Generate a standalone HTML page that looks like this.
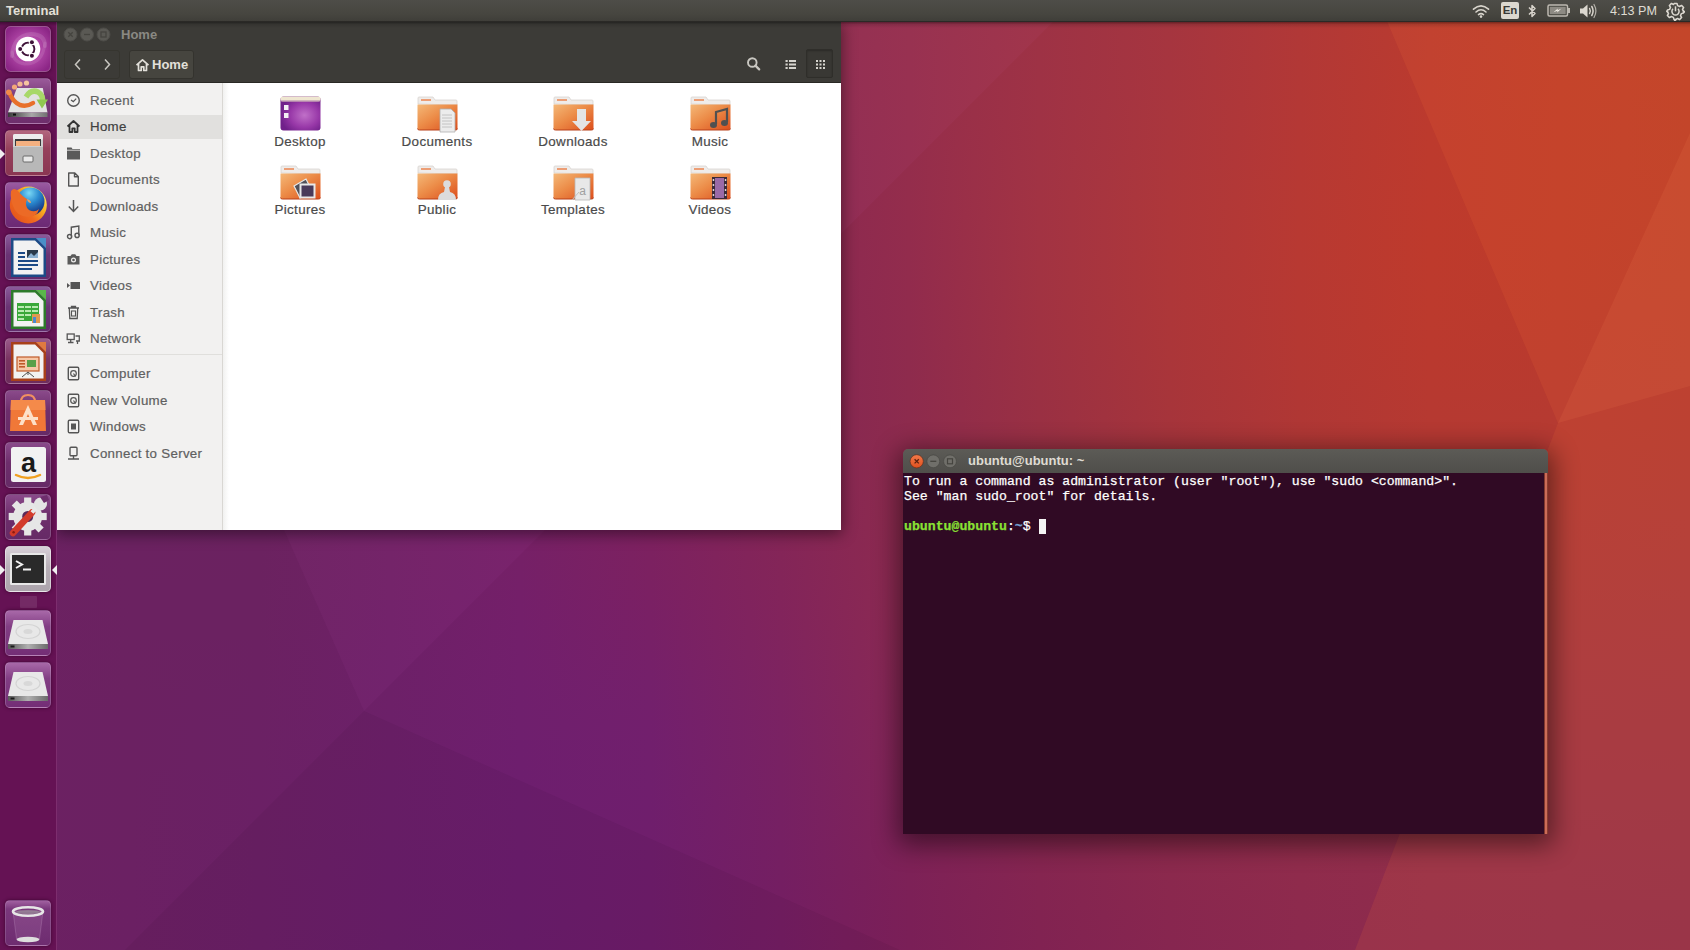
<!DOCTYPE html>
<html><head><meta charset="utf-8">
<style>
*{margin:0;padding:0;box-sizing:border-box}
html,body{width:1690px;height:950px;overflow:hidden;font-family:"Liberation Sans",sans-serif}
body{position:relative;background:#6c2163}
svg{display:block}
.a{position:absolute}
#wall{position:absolute;left:0;top:0}
#panel{position:absolute;z-index:6;left:0;top:0;width:1690px;height:22px;background:linear-gradient(#4e4d48,#46453f 70%,#3f3e39);border-bottom:1px solid #2a2926;color:#dfdbd2}
#launcher{position:absolute;z-index:5;left:0;top:22px;width:57px;height:928px;background:#651254;border-right:1px solid #7d2d6e}
.tile{position:absolute;left:5px;width:46px;height:46px;border-radius:5px;box-shadow:0 0 3px 1px rgba(50,0,40,.45)}
.tile .bg{position:absolute;left:0;top:0;width:46px;height:46px;border-radius:5px;border:1px solid rgba(255,255,255,.18);background:linear-gradient(rgba(255,255,255,.22),rgba(255,255,255,.06) 45%,rgba(255,255,255,.04))}
.tile svg{position:absolute;left:0;top:0}
#naut{position:absolute;left:57px;top:22px;width:784px;height:508px;box-shadow:0 3px 14px 1px rgba(0,0,0,.45)}
#nhead{position:absolute;left:0;top:0;width:784px;height:61px;background:#3c3b37;border-bottom:1px solid #292824}
#side{position:absolute;left:0;top:61px;width:166px;height:447px;background:#f2f1f0;border-right:1px solid #d9d7d3}
#content{position:absolute;left:166px;top:61px;width:618px;height:447px;background:linear-gradient(90deg,#f1f1f0,#f6f6f5 2px,#fff 6px)}
.si{position:absolute;left:0;width:165px;height:26px;font-size:13.3px;color:#606060;line-height:26px}
.si span{position:absolute;left:33px;top:1px;letter-spacing:.3px;-webkit-text-stroke:.2px currentColor}
.si svg{position:absolute;left:9px;top:6px}
.fi{position:absolute;width:110px;text-align:center;font-size:13.4px;color:#4a4a4a;letter-spacing:.35px;-webkit-text-stroke:.2px currentColor}
.fi svg{margin:0 auto}
#term{position:absolute;left:903px;top:449px;width:645px;height:385px;box-shadow:0 6px 26px 5px rgba(0,0,0,.48);border-radius:5px 5px 0 0}
#thead{position:absolute;left:0;top:0;width:645px;height:24px;background:linear-gradient(#5c5b56,#4f4e4a);border-radius:5px 5px 0 0}
#tbody{position:absolute;left:0;top:24px;width:645px;height:361px;background:#300a24;font-family:"Liberation Mono",monospace;color:#fff;font-size:13.2px}
.tl{position:absolute;left:1px;white-space:pre;line-height:15px;-webkit-text-stroke:.25px currentColor}
</style></head><body>
<svg id="wall" width="1690" height="950" viewBox="0 0 1690 950">
<defs><linearGradient id="r0"><stop offset="0.000" stop-color="#73235e"/><stop offset="0.077" stop-color="#76245c"/><stop offset="0.154" stop-color="#792559"/><stop offset="0.231" stop-color="#7d2756"/><stop offset="0.308" stop-color="#822953"/><stop offset="0.385" stop-color="#882a50"/><stop offset="0.462" stop-color="#8e2c4e"/><stop offset="0.538" stop-color="#952f4a"/><stop offset="0.615" stop-color="#9d3245"/><stop offset="0.692" stop-color="#a43540"/><stop offset="0.769" stop-color="#b03837"/><stop offset="0.846" stop-color="#b93b2f"/><stop offset="0.923" stop-color="#bc3d2a"/><stop offset="1.000" stop-color="#bb4028"/></linearGradient><linearGradient id="r1"><stop offset="0.000" stop-color="#73235e"/><stop offset="0.077" stop-color="#75245c"/><stop offset="0.154" stop-color="#792559"/><stop offset="0.231" stop-color="#7d2756"/><stop offset="0.308" stop-color="#822953"/><stop offset="0.385" stop-color="#882a51"/><stop offset="0.462" stop-color="#8e2c4e"/><stop offset="0.538" stop-color="#952f4a"/><stop offset="0.615" stop-color="#9d3245"/><stop offset="0.692" stop-color="#a5353f"/><stop offset="0.769" stop-color="#b03837"/><stop offset="0.846" stop-color="#b93b2f"/><stop offset="0.923" stop-color="#bc3d2a"/><stop offset="1.000" stop-color="#bb4028"/></linearGradient><linearGradient id="r2"><stop offset="0.000" stop-color="#72235f"/><stop offset="0.077" stop-color="#75245c"/><stop offset="0.154" stop-color="#782559"/><stop offset="0.231" stop-color="#7d2756"/><stop offset="0.308" stop-color="#822853"/><stop offset="0.385" stop-color="#882a51"/><stop offset="0.462" stop-color="#8e2c4e"/><stop offset="0.538" stop-color="#952f4b"/><stop offset="0.615" stop-color="#9d3245"/><stop offset="0.692" stop-color="#a5353f"/><stop offset="0.769" stop-color="#b03837"/><stop offset="0.846" stop-color="#b93b2f"/><stop offset="0.923" stop-color="#bc3d2a"/><stop offset="1.000" stop-color="#bc3f28"/></linearGradient><linearGradient id="r3"><stop offset="0.000" stop-color="#72235f"/><stop offset="0.077" stop-color="#75245c"/><stop offset="0.154" stop-color="#78255a"/><stop offset="0.231" stop-color="#7c2657"/><stop offset="0.308" stop-color="#822853"/><stop offset="0.385" stop-color="#872a51"/><stop offset="0.462" stop-color="#8d2c4e"/><stop offset="0.538" stop-color="#952f4b"/><stop offset="0.615" stop-color="#9d3245"/><stop offset="0.692" stop-color="#a5353f"/><stop offset="0.769" stop-color="#b13837"/><stop offset="0.846" stop-color="#ba3b2f"/><stop offset="0.923" stop-color="#bc3d2a"/><stop offset="1.000" stop-color="#bc3f28"/></linearGradient><linearGradient id="r4"><stop offset="0.000" stop-color="#72235f"/><stop offset="0.077" stop-color="#74245d"/><stop offset="0.154" stop-color="#78255a"/><stop offset="0.231" stop-color="#7c2657"/><stop offset="0.308" stop-color="#812854"/><stop offset="0.385" stop-color="#872a51"/><stop offset="0.462" stop-color="#8d2b4f"/><stop offset="0.538" stop-color="#952f4b"/><stop offset="0.615" stop-color="#9e3245"/><stop offset="0.692" stop-color="#a6353f"/><stop offset="0.769" stop-color="#b13837"/><stop offset="0.846" stop-color="#ba3b2f"/><stop offset="0.923" stop-color="#bc3d2a"/><stop offset="1.000" stop-color="#bc3f28"/></linearGradient><linearGradient id="r5"><stop offset="0.000" stop-color="#71235f"/><stop offset="0.077" stop-color="#74245d"/><stop offset="0.154" stop-color="#77255a"/><stop offset="0.231" stop-color="#7c2657"/><stop offset="0.308" stop-color="#812854"/><stop offset="0.385" stop-color="#872951"/><stop offset="0.462" stop-color="#8d2b4f"/><stop offset="0.538" stop-color="#952e4b"/><stop offset="0.615" stop-color="#9e3245"/><stop offset="0.692" stop-color="#a6353f"/><stop offset="0.769" stop-color="#b23836"/><stop offset="0.846" stop-color="#ba3b2f"/><stop offset="0.923" stop-color="#bd3d2a"/><stop offset="1.000" stop-color="#bc3f28"/></linearGradient><linearGradient id="r6"><stop offset="0.000" stop-color="#71235f"/><stop offset="0.077" stop-color="#74245d"/><stop offset="0.154" stop-color="#77255a"/><stop offset="0.231" stop-color="#7b2657"/><stop offset="0.308" stop-color="#812854"/><stop offset="0.385" stop-color="#862951"/><stop offset="0.462" stop-color="#8d2b4f"/><stop offset="0.538" stop-color="#952e4b"/><stop offset="0.615" stop-color="#9e3245"/><stop offset="0.692" stop-color="#a6353f"/><stop offset="0.769" stop-color="#b23836"/><stop offset="0.846" stop-color="#bb3a2e"/><stop offset="0.923" stop-color="#bd3d2a"/><stop offset="1.000" stop-color="#bc3f28"/></linearGradient><linearGradient id="r7"><stop offset="0.000" stop-color="#71235f"/><stop offset="0.077" stop-color="#73235d"/><stop offset="0.154" stop-color="#77255a"/><stop offset="0.231" stop-color="#7b2657"/><stop offset="0.308" stop-color="#802754"/><stop offset="0.385" stop-color="#862952"/><stop offset="0.462" stop-color="#8d2b4f"/><stop offset="0.538" stop-color="#952e4b"/><stop offset="0.615" stop-color="#9e3245"/><stop offset="0.692" stop-color="#a7353e"/><stop offset="0.769" stop-color="#b23836"/><stop offset="0.846" stop-color="#bb3a2e"/><stop offset="0.923" stop-color="#bd3d2a"/><stop offset="1.000" stop-color="#bc3f28"/></linearGradient><linearGradient id="r8"><stop offset="0.000" stop-color="#71235f"/><stop offset="0.077" stop-color="#73235d"/><stop offset="0.154" stop-color="#76245a"/><stop offset="0.231" stop-color="#7b2657"/><stop offset="0.308" stop-color="#802754"/><stop offset="0.385" stop-color="#862952"/><stop offset="0.462" stop-color="#8c2b4f"/><stop offset="0.538" stop-color="#952e4b"/><stop offset="0.615" stop-color="#9f3245"/><stop offset="0.692" stop-color="#a8353e"/><stop offset="0.769" stop-color="#b33836"/><stop offset="0.846" stop-color="#bb3a2e"/><stop offset="0.923" stop-color="#bd3d2a"/><stop offset="1.000" stop-color="#bc3f28"/></linearGradient><linearGradient id="r9"><stop offset="0.000" stop-color="#702360"/><stop offset="0.077" stop-color="#73235d"/><stop offset="0.154" stop-color="#76245b"/><stop offset="0.231" stop-color="#7b2558"/><stop offset="0.308" stop-color="#802755"/><stop offset="0.385" stop-color="#862852"/><stop offset="0.462" stop-color="#8c2a4f"/><stop offset="0.538" stop-color="#952e4b"/><stop offset="0.615" stop-color="#9f3245"/><stop offset="0.692" stop-color="#a8353e"/><stop offset="0.769" stop-color="#b33835"/><stop offset="0.846" stop-color="#bc3a2e"/><stop offset="0.923" stop-color="#bd3d2a"/><stop offset="1.000" stop-color="#bb3f28"/></linearGradient><linearGradient id="r10"><stop offset="0.000" stop-color="#702260"/><stop offset="0.077" stop-color="#72235e"/><stop offset="0.154" stop-color="#76245b"/><stop offset="0.231" stop-color="#7a2558"/><stop offset="0.308" stop-color="#7f2755"/><stop offset="0.385" stop-color="#852852"/><stop offset="0.462" stop-color="#8c2a50"/><stop offset="0.538" stop-color="#952e4b"/><stop offset="0.615" stop-color="#9f3245"/><stop offset="0.692" stop-color="#a9363e"/><stop offset="0.769" stop-color="#b43835"/><stop offset="0.846" stop-color="#bc3a2e"/><stop offset="0.923" stop-color="#bd3d2a"/><stop offset="1.000" stop-color="#bb3e28"/></linearGradient><linearGradient id="r11"><stop offset="0.000" stop-color="#702260"/><stop offset="0.077" stop-color="#72235e"/><stop offset="0.154" stop-color="#75245b"/><stop offset="0.231" stop-color="#7a2558"/><stop offset="0.308" stop-color="#7f2655"/><stop offset="0.385" stop-color="#852852"/><stop offset="0.462" stop-color="#8c2a50"/><stop offset="0.538" stop-color="#952e4b"/><stop offset="0.615" stop-color="#9f3245"/><stop offset="0.692" stop-color="#a9363d"/><stop offset="0.769" stop-color="#b43835"/><stop offset="0.846" stop-color="#bc3a2e"/><stop offset="0.923" stop-color="#bd3c2a"/><stop offset="1.000" stop-color="#bb3e28"/></linearGradient><linearGradient id="r12"><stop offset="0.000" stop-color="#6f2260"/><stop offset="0.077" stop-color="#72235e"/><stop offset="0.154" stop-color="#75245b"/><stop offset="0.231" stop-color="#7a2558"/><stop offset="0.308" stop-color="#7f2655"/><stop offset="0.385" stop-color="#852853"/><stop offset="0.462" stop-color="#8b2a50"/><stop offset="0.538" stop-color="#952e4b"/><stop offset="0.615" stop-color="#a03244"/><stop offset="0.692" stop-color="#aa363d"/><stop offset="0.769" stop-color="#b53835"/><stop offset="0.846" stop-color="#bc3a2e"/><stop offset="0.923" stop-color="#bd3c2a"/><stop offset="1.000" stop-color="#bb3e28"/></linearGradient><linearGradient id="r13"><stop offset="0.000" stop-color="#6f2260"/><stop offset="0.077" stop-color="#71235e"/><stop offset="0.154" stop-color="#75245b"/><stop offset="0.231" stop-color="#792558"/><stop offset="0.308" stop-color="#7f2655"/><stop offset="0.385" stop-color="#842853"/><stop offset="0.462" stop-color="#8b2a50"/><stop offset="0.538" stop-color="#952d4c"/><stop offset="0.615" stop-color="#a03244"/><stop offset="0.692" stop-color="#aa363d"/><stop offset="0.769" stop-color="#b53834"/><stop offset="0.846" stop-color="#bc3a2d"/><stop offset="0.923" stop-color="#bd3c2a"/><stop offset="1.000" stop-color="#bb3e28"/></linearGradient><linearGradient id="r14"><stop offset="0.000" stop-color="#6f2260"/><stop offset="0.077" stop-color="#71235e"/><stop offset="0.154" stop-color="#74245b"/><stop offset="0.231" stop-color="#792559"/><stop offset="0.308" stop-color="#7e2656"/><stop offset="0.385" stop-color="#842753"/><stop offset="0.462" stop-color="#8b2950"/><stop offset="0.538" stop-color="#952d4c"/><stop offset="0.615" stop-color="#a03244"/><stop offset="0.692" stop-color="#ab363c"/><stop offset="0.769" stop-color="#b53834"/><stop offset="0.846" stop-color="#bd3a2d"/><stop offset="0.923" stop-color="#bd3c2a"/><stop offset="1.000" stop-color="#bb3e28"/></linearGradient><linearGradient id="r15"><stop offset="0.000" stop-color="#6e2261"/><stop offset="0.077" stop-color="#71235e"/><stop offset="0.154" stop-color="#74245c"/><stop offset="0.231" stop-color="#792559"/><stop offset="0.308" stop-color="#7e2656"/><stop offset="0.385" stop-color="#842753"/><stop offset="0.462" stop-color="#8b2951"/><stop offset="0.538" stop-color="#942d4c"/><stop offset="0.615" stop-color="#a13344"/><stop offset="0.692" stop-color="#ab363c"/><stop offset="0.769" stop-color="#b63834"/><stop offset="0.846" stop-color="#bd3a2d"/><stop offset="0.923" stop-color="#bd3c2a"/><stop offset="1.000" stop-color="#bb3e28"/></linearGradient><linearGradient id="r16"><stop offset="0.000" stop-color="#6e2261"/><stop offset="0.077" stop-color="#70235f"/><stop offset="0.154" stop-color="#74235c"/><stop offset="0.231" stop-color="#782459"/><stop offset="0.308" stop-color="#7e2556"/><stop offset="0.385" stop-color="#832753"/><stop offset="0.462" stop-color="#8a2951"/><stop offset="0.538" stop-color="#942d4c"/><stop offset="0.615" stop-color="#a13344"/><stop offset="0.692" stop-color="#ac363c"/><stop offset="0.769" stop-color="#b63834"/><stop offset="0.846" stop-color="#bd3a2d"/><stop offset="0.923" stop-color="#bd3c2a"/><stop offset="1.000" stop-color="#bb3e28"/></linearGradient><linearGradient id="r17"><stop offset="0.000" stop-color="#6e2261"/><stop offset="0.077" stop-color="#70235f"/><stop offset="0.154" stop-color="#74235c"/><stop offset="0.231" stop-color="#782459"/><stop offset="0.308" stop-color="#7d2556"/><stop offset="0.385" stop-color="#832754"/><stop offset="0.462" stop-color="#8a2951"/><stop offset="0.538" stop-color="#942d4c"/><stop offset="0.615" stop-color="#a13344"/><stop offset="0.692" stop-color="#ac373b"/><stop offset="0.769" stop-color="#b63833"/><stop offset="0.846" stop-color="#bd3a2d"/><stop offset="0.923" stop-color="#bd3c2a"/><stop offset="1.000" stop-color="#bb3d28"/></linearGradient><linearGradient id="r18"><stop offset="0.000" stop-color="#6e2261"/><stop offset="0.077" stop-color="#70225f"/><stop offset="0.154" stop-color="#73235c"/><stop offset="0.231" stop-color="#782459"/><stop offset="0.308" stop-color="#7d2556"/><stop offset="0.385" stop-color="#832654"/><stop offset="0.462" stop-color="#8a2951"/><stop offset="0.538" stop-color="#942d4c"/><stop offset="0.615" stop-color="#a13344"/><stop offset="0.692" stop-color="#ad373b"/><stop offset="0.769" stop-color="#b73933"/><stop offset="0.846" stop-color="#bd3a2d"/><stop offset="0.923" stop-color="#bd3c2a"/><stop offset="1.000" stop-color="#bb3d29"/></linearGradient><linearGradient id="r19"><stop offset="0.000" stop-color="#6d2261"/><stop offset="0.077" stop-color="#6f225f"/><stop offset="0.154" stop-color="#73235c"/><stop offset="0.231" stop-color="#77245a"/><stop offset="0.308" stop-color="#7d2557"/><stop offset="0.385" stop-color="#832654"/><stop offset="0.462" stop-color="#8a2851"/><stop offset="0.538" stop-color="#942d4c"/><stop offset="0.615" stop-color="#a23343"/><stop offset="0.692" stop-color="#ad373b"/><stop offset="0.769" stop-color="#b73933"/><stop offset="0.846" stop-color="#be3a2d"/><stop offset="0.923" stop-color="#bd3c2a"/><stop offset="1.000" stop-color="#ba3d29"/></linearGradient><linearGradient id="r20"><stop offset="0.000" stop-color="#6d2261"/><stop offset="0.077" stop-color="#6f225f"/><stop offset="0.154" stop-color="#73235c"/><stop offset="0.231" stop-color="#77245a"/><stop offset="0.308" stop-color="#7c2557"/><stop offset="0.385" stop-color="#822654"/><stop offset="0.462" stop-color="#892852"/><stop offset="0.538" stop-color="#942d4c"/><stop offset="0.615" stop-color="#a23343"/><stop offset="0.692" stop-color="#ae373a"/><stop offset="0.769" stop-color="#b73933"/><stop offset="0.846" stop-color="#be3a2d"/><stop offset="0.923" stop-color="#bd3c2a"/><stop offset="1.000" stop-color="#ba3d29"/></linearGradient><linearGradient id="r21"><stop offset="0.000" stop-color="#6d2261"/><stop offset="0.077" stop-color="#6f225f"/><stop offset="0.154" stop-color="#72235d"/><stop offset="0.231" stop-color="#77245a"/><stop offset="0.308" stop-color="#7c2457"/><stop offset="0.385" stop-color="#822654"/><stop offset="0.462" stop-color="#892852"/><stop offset="0.538" stop-color="#942c4c"/><stop offset="0.615" stop-color="#a23343"/><stop offset="0.692" stop-color="#ae373a"/><stop offset="0.769" stop-color="#b73932"/><stop offset="0.846" stop-color="#be3a2d"/><stop offset="0.923" stop-color="#bd3c2a"/><stop offset="1.000" stop-color="#ba3d29"/></linearGradient><linearGradient id="r22"><stop offset="0.000" stop-color="#6d2261"/><stop offset="0.077" stop-color="#6f225f"/><stop offset="0.154" stop-color="#72235d"/><stop offset="0.231" stop-color="#77235a"/><stop offset="0.308" stop-color="#7c2457"/><stop offset="0.385" stop-color="#822555"/><stop offset="0.462" stop-color="#892852"/><stop offset="0.538" stop-color="#932c4c"/><stop offset="0.615" stop-color="#a23343"/><stop offset="0.692" stop-color="#ae373a"/><stop offset="0.769" stop-color="#b83932"/><stop offset="0.846" stop-color="#be3a2c"/><stop offset="0.923" stop-color="#bd3b2a"/><stop offset="1.000" stop-color="#ba3d29"/></linearGradient><linearGradient id="r23"><stop offset="0.000" stop-color="#6c2262"/><stop offset="0.077" stop-color="#6e2260"/><stop offset="0.154" stop-color="#72235d"/><stop offset="0.231" stop-color="#76235a"/><stop offset="0.308" stop-color="#7c2458"/><stop offset="0.385" stop-color="#812555"/><stop offset="0.462" stop-color="#882852"/><stop offset="0.538" stop-color="#932c4c"/><stop offset="0.615" stop-color="#a23343"/><stop offset="0.692" stop-color="#ae373a"/><stop offset="0.769" stop-color="#b83932"/><stop offset="0.846" stop-color="#be3a2c"/><stop offset="0.923" stop-color="#bd3b2a"/><stop offset="1.000" stop-color="#b93c2a"/></linearGradient><linearGradient id="r24"><stop offset="0.000" stop-color="#6c2262"/><stop offset="0.077" stop-color="#6e2260"/><stop offset="0.154" stop-color="#71235d"/><stop offset="0.231" stop-color="#76235b"/><stop offset="0.308" stop-color="#7b2458"/><stop offset="0.385" stop-color="#812555"/><stop offset="0.462" stop-color="#882752"/><stop offset="0.538" stop-color="#932c4d"/><stop offset="0.615" stop-color="#a23343"/><stop offset="0.692" stop-color="#ae373a"/><stop offset="0.769" stop-color="#b83932"/><stop offset="0.846" stop-color="#be3a2c"/><stop offset="0.923" stop-color="#bd3b2a"/><stop offset="1.000" stop-color="#b93c2a"/></linearGradient><linearGradient id="r25"><stop offset="0.000" stop-color="#6c2262"/><stop offset="0.077" stop-color="#6e2260"/><stop offset="0.154" stop-color="#71235d"/><stop offset="0.231" stop-color="#76235b"/><stop offset="0.308" stop-color="#7b2458"/><stop offset="0.385" stop-color="#812555"/><stop offset="0.462" stop-color="#882752"/><stop offset="0.538" stop-color="#932c4d"/><stop offset="0.615" stop-color="#a23343"/><stop offset="0.692" stop-color="#af3739"/><stop offset="0.769" stop-color="#b83932"/><stop offset="0.846" stop-color="#be3a2c"/><stop offset="0.923" stop-color="#bc3b2b"/><stop offset="1.000" stop-color="#b93c2a"/></linearGradient><linearGradient id="r26"><stop offset="0.000" stop-color="#6c2162"/><stop offset="0.077" stop-color="#6d2260"/><stop offset="0.154" stop-color="#71225d"/><stop offset="0.231" stop-color="#76235b"/><stop offset="0.308" stop-color="#7b2358"/><stop offset="0.385" stop-color="#812556"/><stop offset="0.462" stop-color="#882753"/><stop offset="0.538" stop-color="#922c4d"/><stop offset="0.615" stop-color="#a23342"/><stop offset="0.692" stop-color="#ae3739"/><stop offset="0.769" stop-color="#b83932"/><stop offset="0.846" stop-color="#be3a2c"/><stop offset="0.923" stop-color="#bc3b2b"/><stop offset="1.000" stop-color="#b93c2a"/></linearGradient><linearGradient id="r27"><stop offset="0.000" stop-color="#6b2162"/><stop offset="0.077" stop-color="#6d2260"/><stop offset="0.154" stop-color="#71225e"/><stop offset="0.231" stop-color="#75235b"/><stop offset="0.308" stop-color="#7b2359"/><stop offset="0.385" stop-color="#802556"/><stop offset="0.462" stop-color="#872753"/><stop offset="0.538" stop-color="#922c4d"/><stop offset="0.615" stop-color="#a23342"/><stop offset="0.692" stop-color="#ae3739"/><stop offset="0.769" stop-color="#b73932"/><stop offset="0.846" stop-color="#bd3a2d"/><stop offset="0.923" stop-color="#bc3b2b"/><stop offset="1.000" stop-color="#b83c2b"/></linearGradient><linearGradient id="r28"><stop offset="0.000" stop-color="#6b2162"/><stop offset="0.077" stop-color="#6d2260"/><stop offset="0.154" stop-color="#70225e"/><stop offset="0.231" stop-color="#75235c"/><stop offset="0.308" stop-color="#7a2359"/><stop offset="0.385" stop-color="#802456"/><stop offset="0.462" stop-color="#872753"/><stop offset="0.538" stop-color="#922b4d"/><stop offset="0.615" stop-color="#a13342"/><stop offset="0.692" stop-color="#ae3739"/><stop offset="0.769" stop-color="#b73832"/><stop offset="0.846" stop-color="#bd3a2d"/><stop offset="0.923" stop-color="#bc3b2b"/><stop offset="1.000" stop-color="#b83c2b"/></linearGradient><linearGradient id="r29"><stop offset="0.000" stop-color="#6b2162"/><stop offset="0.077" stop-color="#6d2260"/><stop offset="0.154" stop-color="#70225e"/><stop offset="0.231" stop-color="#75235c"/><stop offset="0.308" stop-color="#7a2359"/><stop offset="0.385" stop-color="#802456"/><stop offset="0.462" stop-color="#872753"/><stop offset="0.538" stop-color="#912b4d"/><stop offset="0.615" stop-color="#a13342"/><stop offset="0.692" stop-color="#ae3739"/><stop offset="0.769" stop-color="#b73832"/><stop offset="0.846" stop-color="#bd3a2d"/><stop offset="0.923" stop-color="#bb3b2b"/><stop offset="1.000" stop-color="#b83c2b"/></linearGradient><linearGradient id="r30"><stop offset="0.000" stop-color="#6b2162"/><stop offset="0.077" stop-color="#6d2260"/><stop offset="0.154" stop-color="#70225e"/><stop offset="0.231" stop-color="#75225c"/><stop offset="0.308" stop-color="#7a235a"/><stop offset="0.385" stop-color="#802456"/><stop offset="0.462" stop-color="#872753"/><stop offset="0.538" stop-color="#912b4d"/><stop offset="0.615" stop-color="#a13242"/><stop offset="0.692" stop-color="#ae3739"/><stop offset="0.769" stop-color="#b73832"/><stop offset="0.846" stop-color="#bd3a2d"/><stop offset="0.923" stop-color="#bb3b2c"/><stop offset="1.000" stop-color="#b73b2c"/></linearGradient><linearGradient id="r31"><stop offset="0.000" stop-color="#6b2162"/><stop offset="0.077" stop-color="#6c2260"/><stop offset="0.154" stop-color="#70225e"/><stop offset="0.231" stop-color="#74225c"/><stop offset="0.308" stop-color="#7a235a"/><stop offset="0.385" stop-color="#802457"/><stop offset="0.462" stop-color="#862653"/><stop offset="0.538" stop-color="#912b4d"/><stop offset="0.615" stop-color="#a03242"/><stop offset="0.692" stop-color="#ad3739"/><stop offset="0.769" stop-color="#b63832"/><stop offset="0.846" stop-color="#bc3a2d"/><stop offset="0.923" stop-color="#bb3b2c"/><stop offset="1.000" stop-color="#b73b2c"/></linearGradient><linearGradient id="r32"><stop offset="0.000" stop-color="#6b2162"/><stop offset="0.077" stop-color="#6c2260"/><stop offset="0.154" stop-color="#70225e"/><stop offset="0.231" stop-color="#74225d"/><stop offset="0.308" stop-color="#7a235a"/><stop offset="0.385" stop-color="#7f2457"/><stop offset="0.462" stop-color="#862653"/><stop offset="0.538" stop-color="#902b4d"/><stop offset="0.615" stop-color="#a03242"/><stop offset="0.692" stop-color="#ad3639"/><stop offset="0.769" stop-color="#b63832"/><stop offset="0.846" stop-color="#bc3a2e"/><stop offset="0.923" stop-color="#ba3a2c"/><stop offset="1.000" stop-color="#b73b2d"/></linearGradient><linearGradient id="r33"><stop offset="0.000" stop-color="#6b2162"/><stop offset="0.077" stop-color="#6c2260"/><stop offset="0.154" stop-color="#6f225e"/><stop offset="0.231" stop-color="#74225d"/><stop offset="0.308" stop-color="#79225b"/><stop offset="0.385" stop-color="#7f2457"/><stop offset="0.462" stop-color="#862653"/><stop offset="0.538" stop-color="#902b4d"/><stop offset="0.615" stop-color="#9f3242"/><stop offset="0.692" stop-color="#ac3639"/><stop offset="0.769" stop-color="#b53832"/><stop offset="0.846" stop-color="#bb392e"/><stop offset="0.923" stop-color="#ba3a2d"/><stop offset="1.000" stop-color="#b63b2d"/></linearGradient><linearGradient id="r34"><stop offset="0.000" stop-color="#6b2162"/><stop offset="0.077" stop-color="#6c2260"/><stop offset="0.154" stop-color="#6f225f"/><stop offset="0.231" stop-color="#74225d"/><stop offset="0.308" stop-color="#79225b"/><stop offset="0.385" stop-color="#7f2358"/><stop offset="0.462" stop-color="#862654"/><stop offset="0.538" stop-color="#902b4d"/><stop offset="0.615" stop-color="#9e3242"/><stop offset="0.692" stop-color="#ab3639"/><stop offset="0.769" stop-color="#b53832"/><stop offset="0.846" stop-color="#bb392e"/><stop offset="0.923" stop-color="#b93a2d"/><stop offset="1.000" stop-color="#b63b2e"/></linearGradient><linearGradient id="r35"><stop offset="0.000" stop-color="#6b2162"/><stop offset="0.077" stop-color="#6c2261"/><stop offset="0.154" stop-color="#6f225f"/><stop offset="0.231" stop-color="#73225e"/><stop offset="0.308" stop-color="#79225c"/><stop offset="0.385" stop-color="#7f2358"/><stop offset="0.462" stop-color="#852654"/><stop offset="0.538" stop-color="#8f2b4d"/><stop offset="0.615" stop-color="#9e3143"/><stop offset="0.692" stop-color="#ab3639"/><stop offset="0.769" stop-color="#b43833"/><stop offset="0.846" stop-color="#ba392e"/><stop offset="0.923" stop-color="#b93a2e"/><stop offset="1.000" stop-color="#b63b2e"/></linearGradient><linearGradient id="r36"><stop offset="0.000" stop-color="#6b2162"/><stop offset="0.077" stop-color="#6c2261"/><stop offset="0.154" stop-color="#6f225f"/><stop offset="0.231" stop-color="#73225e"/><stop offset="0.308" stop-color="#79225c"/><stop offset="0.385" stop-color="#7f2358"/><stop offset="0.462" stop-color="#852654"/><stop offset="0.538" stop-color="#8f2b4d"/><stop offset="0.615" stop-color="#9d3143"/><stop offset="0.692" stop-color="#aa363a"/><stop offset="0.769" stop-color="#b43833"/><stop offset="0.846" stop-color="#b9392f"/><stop offset="0.923" stop-color="#b83a2e"/><stop offset="1.000" stop-color="#b53b2f"/></linearGradient><linearGradient id="r37"><stop offset="0.000" stop-color="#6b2162"/><stop offset="0.077" stop-color="#6c2261"/><stop offset="0.154" stop-color="#6f225f"/><stop offset="0.231" stop-color="#73225e"/><stop offset="0.308" stop-color="#79225c"/><stop offset="0.385" stop-color="#7f2358"/><stop offset="0.462" stop-color="#852654"/><stop offset="0.538" stop-color="#8e2b4d"/><stop offset="0.615" stop-color="#9c3143"/><stop offset="0.692" stop-color="#a9353a"/><stop offset="0.769" stop-color="#b33833"/><stop offset="0.846" stop-color="#b9392f"/><stop offset="0.923" stop-color="#b83a2f"/><stop offset="1.000" stop-color="#b53b2f"/></linearGradient><linearGradient id="r38"><stop offset="0.000" stop-color="#6a2162"/><stop offset="0.077" stop-color="#6c2261"/><stop offset="0.154" stop-color="#6e225f"/><stop offset="0.231" stop-color="#73225e"/><stop offset="0.308" stop-color="#79225d"/><stop offset="0.385" stop-color="#7f2359"/><stop offset="0.462" stop-color="#852654"/><stop offset="0.538" stop-color="#8e2b4d"/><stop offset="0.615" stop-color="#9c3143"/><stop offset="0.692" stop-color="#a8353a"/><stop offset="0.769" stop-color="#b23733"/><stop offset="0.846" stop-color="#b83930"/><stop offset="0.923" stop-color="#b73a2f"/><stop offset="1.000" stop-color="#b43b30"/></linearGradient><linearGradient id="r39"><stop offset="0.000" stop-color="#6a2162"/><stop offset="0.077" stop-color="#6c2261"/><stop offset="0.154" stop-color="#6e225f"/><stop offset="0.231" stop-color="#73225f"/><stop offset="0.308" stop-color="#78225d"/><stop offset="0.385" stop-color="#7e2359"/><stop offset="0.462" stop-color="#852654"/><stop offset="0.538" stop-color="#8e2b4d"/><stop offset="0.615" stop-color="#9b3143"/><stop offset="0.692" stop-color="#a7353a"/><stop offset="0.769" stop-color="#b23734"/><stop offset="0.846" stop-color="#b73930"/><stop offset="0.923" stop-color="#b73a30"/><stop offset="1.000" stop-color="#b43a30"/></linearGradient><linearGradient id="r40"><stop offset="0.000" stop-color="#6a2162"/><stop offset="0.077" stop-color="#6b2261"/><stop offset="0.154" stop-color="#6e225f"/><stop offset="0.231" stop-color="#72225f"/><stop offset="0.308" stop-color="#78215e"/><stop offset="0.385" stop-color="#7e2359"/><stop offset="0.462" stop-color="#852654"/><stop offset="0.538" stop-color="#8e2b4d"/><stop offset="0.615" stop-color="#9a3043"/><stop offset="0.692" stop-color="#a7353a"/><stop offset="0.769" stop-color="#b13734"/><stop offset="0.846" stop-color="#b73931"/><stop offset="0.923" stop-color="#b63a30"/><stop offset="1.000" stop-color="#b33a31"/></linearGradient><linearGradient id="r41"><stop offset="0.000" stop-color="#6a2162"/><stop offset="0.077" stop-color="#6b2261"/><stop offset="0.154" stop-color="#6e225f"/><stop offset="0.231" stop-color="#72225f"/><stop offset="0.308" stop-color="#78215e"/><stop offset="0.385" stop-color="#7e235a"/><stop offset="0.462" stop-color="#842654"/><stop offset="0.538" stop-color="#8d2b4d"/><stop offset="0.615" stop-color="#9a3043"/><stop offset="0.692" stop-color="#a6343b"/><stop offset="0.769" stop-color="#b03734"/><stop offset="0.846" stop-color="#b63931"/><stop offset="0.923" stop-color="#b63a31"/><stop offset="1.000" stop-color="#b33a31"/></linearGradient><linearGradient id="r42"><stop offset="0.000" stop-color="#6b2162"/><stop offset="0.077" stop-color="#6b2261"/><stop offset="0.154" stop-color="#6e225f"/><stop offset="0.231" stop-color="#722160"/><stop offset="0.308" stop-color="#78215f"/><stop offset="0.385" stop-color="#7e235a"/><stop offset="0.462" stop-color="#842654"/><stop offset="0.538" stop-color="#8d2b4d"/><stop offset="0.615" stop-color="#993043"/><stop offset="0.692" stop-color="#a5343b"/><stop offset="0.769" stop-color="#af3735"/><stop offset="0.846" stop-color="#b53932"/><stop offset="0.923" stop-color="#b53a31"/><stop offset="1.000" stop-color="#b23a32"/></linearGradient><linearGradient id="r43"><stop offset="0.000" stop-color="#6b2162"/><stop offset="0.077" stop-color="#6b2261"/><stop offset="0.154" stop-color="#6d225f"/><stop offset="0.231" stop-color="#722160"/><stop offset="0.308" stop-color="#78215f"/><stop offset="0.385" stop-color="#7e225b"/><stop offset="0.462" stop-color="#842654"/><stop offset="0.538" stop-color="#8d2b4d"/><stop offset="0.615" stop-color="#993044"/><stop offset="0.692" stop-color="#a4343b"/><stop offset="0.769" stop-color="#af3735"/><stop offset="0.846" stop-color="#b43832"/><stop offset="0.923" stop-color="#b43932"/><stop offset="1.000" stop-color="#b23a33"/></linearGradient><linearGradient id="r44"><stop offset="0.000" stop-color="#6b2162"/><stop offset="0.077" stop-color="#6b2261"/><stop offset="0.154" stop-color="#6d2260"/><stop offset="0.231" stop-color="#722160"/><stop offset="0.308" stop-color="#782160"/><stop offset="0.385" stop-color="#7e225b"/><stop offset="0.462" stop-color="#842655"/><stop offset="0.538" stop-color="#8d2b4d"/><stop offset="0.615" stop-color="#983044"/><stop offset="0.692" stop-color="#a4343c"/><stop offset="0.769" stop-color="#ae3736"/><stop offset="0.846" stop-color="#b43833"/><stop offset="0.923" stop-color="#b43933"/><stop offset="1.000" stop-color="#b13a33"/></linearGradient><linearGradient id="r45"><stop offset="0.000" stop-color="#6b2162"/><stop offset="0.077" stop-color="#6b2261"/><stop offset="0.154" stop-color="#6d2260"/><stop offset="0.231" stop-color="#712161"/><stop offset="0.308" stop-color="#782160"/><stop offset="0.385" stop-color="#7e225b"/><stop offset="0.462" stop-color="#842655"/><stop offset="0.538" stop-color="#8d2b4d"/><stop offset="0.615" stop-color="#982f44"/><stop offset="0.692" stop-color="#a3333c"/><stop offset="0.769" stop-color="#ad3736"/><stop offset="0.846" stop-color="#b33833"/><stop offset="0.923" stop-color="#b33933"/><stop offset="1.000" stop-color="#b13a34"/></linearGradient><linearGradient id="r46"><stop offset="0.000" stop-color="#6b2162"/><stop offset="0.077" stop-color="#6b2261"/><stop offset="0.154" stop-color="#6d2260"/><stop offset="0.231" stop-color="#712161"/><stop offset="0.308" stop-color="#772161"/><stop offset="0.385" stop-color="#7e225c"/><stop offset="0.462" stop-color="#842655"/><stop offset="0.538" stop-color="#8d2b4d"/><stop offset="0.615" stop-color="#972f44"/><stop offset="0.692" stop-color="#a2333c"/><stop offset="0.769" stop-color="#ac3636"/><stop offset="0.846" stop-color="#b23834"/><stop offset="0.923" stop-color="#b23934"/><stop offset="1.000" stop-color="#b03a35"/></linearGradient><linearGradient id="r47"><stop offset="0.000" stop-color="#6b2162"/><stop offset="0.077" stop-color="#6b2261"/><stop offset="0.154" stop-color="#6d2260"/><stop offset="0.231" stop-color="#712161"/><stop offset="0.308" stop-color="#772161"/><stop offset="0.385" stop-color="#7e225c"/><stop offset="0.462" stop-color="#842655"/><stop offset="0.538" stop-color="#8d2b4d"/><stop offset="0.615" stop-color="#972f44"/><stop offset="0.692" stop-color="#a2333d"/><stop offset="0.769" stop-color="#ac3637"/><stop offset="0.846" stop-color="#b13834"/><stop offset="0.923" stop-color="#b23934"/><stop offset="1.000" stop-color="#b03a35"/></linearGradient><linearGradient id="r48"><stop offset="0.000" stop-color="#6b2162"/><stop offset="0.077" stop-color="#6b2261"/><stop offset="0.154" stop-color="#6d2260"/><stop offset="0.231" stop-color="#712162"/><stop offset="0.308" stop-color="#772162"/><stop offset="0.385" stop-color="#7e225d"/><stop offset="0.462" stop-color="#842655"/><stop offset="0.538" stop-color="#8d2b4e"/><stop offset="0.615" stop-color="#962f45"/><stop offset="0.692" stop-color="#a1333d"/><stop offset="0.769" stop-color="#ab3637"/><stop offset="0.846" stop-color="#b03835"/><stop offset="0.923" stop-color="#b13935"/><stop offset="1.000" stop-color="#af3936"/></linearGradient><linearGradient id="r49"><stop offset="0.000" stop-color="#6b2162"/><stop offset="0.077" stop-color="#6b2261"/><stop offset="0.154" stop-color="#6c2260"/><stop offset="0.231" stop-color="#712162"/><stop offset="0.308" stop-color="#772063"/><stop offset="0.385" stop-color="#7e225d"/><stop offset="0.462" stop-color="#842656"/><stop offset="0.538" stop-color="#8d2b4e"/><stop offset="0.615" stop-color="#962f45"/><stop offset="0.692" stop-color="#a0333d"/><stop offset="0.769" stop-color="#aa3638"/><stop offset="0.846" stop-color="#b03836"/><stop offset="0.923" stop-color="#b03936"/><stop offset="1.000" stop-color="#af3937"/></linearGradient><linearGradient id="r50"><stop offset="0.000" stop-color="#6b2162"/><stop offset="0.077" stop-color="#6b2261"/><stop offset="0.154" stop-color="#6c2260"/><stop offset="0.231" stop-color="#702162"/><stop offset="0.308" stop-color="#772063"/><stop offset="0.385" stop-color="#7d225d"/><stop offset="0.462" stop-color="#842556"/><stop offset="0.538" stop-color="#8d2b4e"/><stop offset="0.615" stop-color="#962f45"/><stop offset="0.692" stop-color="#a0333e"/><stop offset="0.769" stop-color="#a93638"/><stop offset="0.846" stop-color="#af3836"/><stop offset="0.923" stop-color="#b03936"/><stop offset="1.000" stop-color="#ae3937"/></linearGradient><linearGradient id="r51"><stop offset="0.000" stop-color="#6b2162"/><stop offset="0.077" stop-color="#6b2261"/><stop offset="0.154" stop-color="#6c2260"/><stop offset="0.231" stop-color="#702163"/><stop offset="0.308" stop-color="#772064"/><stop offset="0.385" stop-color="#7d215e"/><stop offset="0.462" stop-color="#842556"/><stop offset="0.538" stop-color="#8d2b4e"/><stop offset="0.615" stop-color="#962f46"/><stop offset="0.692" stop-color="#9f333e"/><stop offset="0.769" stop-color="#a93639"/><stop offset="0.846" stop-color="#ae3837"/><stop offset="0.923" stop-color="#af3937"/><stop offset="1.000" stop-color="#ad3938"/></linearGradient><linearGradient id="r52"><stop offset="0.000" stop-color="#6b2162"/><stop offset="0.077" stop-color="#6b2261"/><stop offset="0.154" stop-color="#6c2260"/><stop offset="0.231" stop-color="#702163"/><stop offset="0.308" stop-color="#762065"/><stop offset="0.385" stop-color="#7d215e"/><stop offset="0.462" stop-color="#842557"/><stop offset="0.538" stop-color="#8d2b4e"/><stop offset="0.615" stop-color="#952f46"/><stop offset="0.692" stop-color="#9f333f"/><stop offset="0.769" stop-color="#a8363a"/><stop offset="0.846" stop-color="#ad3837"/><stop offset="0.923" stop-color="#ae3838"/><stop offset="1.000" stop-color="#ad3939"/></linearGradient><linearGradient id="r53"><stop offset="0.000" stop-color="#6b2162"/><stop offset="0.077" stop-color="#6b2261"/><stop offset="0.154" stop-color="#6c2260"/><stop offset="0.231" stop-color="#702163"/><stop offset="0.308" stop-color="#762065"/><stop offset="0.385" stop-color="#7d215f"/><stop offset="0.462" stop-color="#842557"/><stop offset="0.538" stop-color="#8d2b4f"/><stop offset="0.615" stop-color="#952f46"/><stop offset="0.692" stop-color="#9e323f"/><stop offset="0.769" stop-color="#a7363a"/><stop offset="0.846" stop-color="#ac3838"/><stop offset="0.923" stop-color="#ad3838"/><stop offset="1.000" stop-color="#ac3939"/></linearGradient><linearGradient id="r54"><stop offset="0.000" stop-color="#6b2162"/><stop offset="0.077" stop-color="#6b2261"/><stop offset="0.154" stop-color="#6c2260"/><stop offset="0.231" stop-color="#702164"/><stop offset="0.308" stop-color="#762066"/><stop offset="0.385" stop-color="#7d2160"/><stop offset="0.462" stop-color="#842557"/><stop offset="0.538" stop-color="#8d2a4f"/><stop offset="0.615" stop-color="#952e46"/><stop offset="0.692" stop-color="#9e323f"/><stop offset="0.769" stop-color="#a6363b"/><stop offset="0.846" stop-color="#ac3739"/><stop offset="0.923" stop-color="#ad3839"/><stop offset="1.000" stop-color="#ab393a"/></linearGradient><linearGradient id="r55"><stop offset="0.000" stop-color="#6b2162"/><stop offset="0.077" stop-color="#6b2261"/><stop offset="0.154" stop-color="#6b2260"/><stop offset="0.231" stop-color="#6f2164"/><stop offset="0.308" stop-color="#762067"/><stop offset="0.385" stop-color="#7c2160"/><stop offset="0.462" stop-color="#842558"/><stop offset="0.538" stop-color="#8d2a4f"/><stop offset="0.615" stop-color="#952e47"/><stop offset="0.692" stop-color="#9d3240"/><stop offset="0.769" stop-color="#a6363b"/><stop offset="0.846" stop-color="#ab3739"/><stop offset="0.923" stop-color="#ac383a"/><stop offset="1.000" stop-color="#ab383b"/></linearGradient><linearGradient id="r56"><stop offset="0.000" stop-color="#6b2162"/><stop offset="0.077" stop-color="#6b2261"/><stop offset="0.154" stop-color="#6b2260"/><stop offset="0.231" stop-color="#6f2164"/><stop offset="0.308" stop-color="#752067"/><stop offset="0.385" stop-color="#7c2161"/><stop offset="0.462" stop-color="#832558"/><stop offset="0.538" stop-color="#8d2a50"/><stop offset="0.615" stop-color="#942e47"/><stop offset="0.692" stop-color="#9d3240"/><stop offset="0.769" stop-color="#a5363c"/><stop offset="0.846" stop-color="#aa373a"/><stop offset="0.923" stop-color="#ab383a"/><stop offset="1.000" stop-color="#aa383b"/></linearGradient><linearGradient id="r57"><stop offset="0.000" stop-color="#6b2162"/><stop offset="0.077" stop-color="#6b2261"/><stop offset="0.154" stop-color="#6b2260"/><stop offset="0.231" stop-color="#6f2165"/><stop offset="0.308" stop-color="#752068"/><stop offset="0.385" stop-color="#7c2161"/><stop offset="0.462" stop-color="#832559"/><stop offset="0.538" stop-color="#8d2a50"/><stop offset="0.615" stop-color="#942e47"/><stop offset="0.692" stop-color="#9c3241"/><stop offset="0.769" stop-color="#a4363c"/><stop offset="0.846" stop-color="#a9373b"/><stop offset="0.923" stop-color="#aa383b"/><stop offset="1.000" stop-color="#a9383c"/></linearGradient><linearGradient id="r58"><stop offset="0.000" stop-color="#6b2162"/><stop offset="0.077" stop-color="#6b2261"/><stop offset="0.154" stop-color="#6b2261"/><stop offset="0.231" stop-color="#6f2165"/><stop offset="0.308" stop-color="#752069"/><stop offset="0.385" stop-color="#7b2162"/><stop offset="0.462" stop-color="#83255a"/><stop offset="0.538" stop-color="#8c2a50"/><stop offset="0.615" stop-color="#942e48"/><stop offset="0.692" stop-color="#9c3241"/><stop offset="0.769" stop-color="#a4353d"/><stop offset="0.846" stop-color="#a8373b"/><stop offset="0.923" stop-color="#aa383c"/><stop offset="1.000" stop-color="#a9383d"/></linearGradient><linearGradient id="r59"><stop offset="0.000" stop-color="#6b2162"/><stop offset="0.077" stop-color="#6b2261"/><stop offset="0.154" stop-color="#6b2261"/><stop offset="0.231" stop-color="#6f2165"/><stop offset="0.308" stop-color="#741f69"/><stop offset="0.385" stop-color="#7b2063"/><stop offset="0.462" stop-color="#82245a"/><stop offset="0.538" stop-color="#8c2a51"/><stop offset="0.615" stop-color="#932e48"/><stop offset="0.692" stop-color="#9b3242"/><stop offset="0.769" stop-color="#a3353e"/><stop offset="0.846" stop-color="#a8373c"/><stop offset="0.923" stop-color="#a9373c"/><stop offset="1.000" stop-color="#a8383d"/></linearGradient><linearGradient id="r60"><stop offset="0.000" stop-color="#6b2162"/><stop offset="0.077" stop-color="#6b2261"/><stop offset="0.154" stop-color="#6b2261"/><stop offset="0.231" stop-color="#6e2066"/><stop offset="0.308" stop-color="#741f6a"/><stop offset="0.385" stop-color="#7a2064"/><stop offset="0.462" stop-color="#82245b"/><stop offset="0.538" stop-color="#8c2a51"/><stop offset="0.615" stop-color="#932e48"/><stop offset="0.692" stop-color="#9b3242"/><stop offset="0.769" stop-color="#a2353e"/><stop offset="0.846" stop-color="#a7373c"/><stop offset="0.923" stop-color="#a8373d"/><stop offset="1.000" stop-color="#a7373e"/></linearGradient><linearGradient id="r61"><stop offset="0.000" stop-color="#6c2162"/><stop offset="0.077" stop-color="#6b2261"/><stop offset="0.154" stop-color="#6b2261"/><stop offset="0.231" stop-color="#6e2066"/><stop offset="0.308" stop-color="#741f6a"/><stop offset="0.385" stop-color="#792065"/><stop offset="0.462" stop-color="#82245c"/><stop offset="0.538" stop-color="#8c2a51"/><stop offset="0.615" stop-color="#932d49"/><stop offset="0.692" stop-color="#9a3243"/><stop offset="0.769" stop-color="#a1353f"/><stop offset="0.846" stop-color="#a6373d"/><stop offset="0.923" stop-color="#a7373d"/><stop offset="1.000" stop-color="#a6373e"/></linearGradient><linearGradient id="r62"><stop offset="0.000" stop-color="#6c2162"/><stop offset="0.077" stop-color="#6b2261"/><stop offset="0.154" stop-color="#6b2261"/><stop offset="0.231" stop-color="#6e2066"/><stop offset="0.308" stop-color="#731f6b"/><stop offset="0.385" stop-color="#792066"/><stop offset="0.462" stop-color="#81245c"/><stop offset="0.538" stop-color="#8b2952"/><stop offset="0.615" stop-color="#922d49"/><stop offset="0.692" stop-color="#9a3143"/><stop offset="0.769" stop-color="#a1353f"/><stop offset="0.846" stop-color="#a5363e"/><stop offset="0.923" stop-color="#a6373e"/><stop offset="1.000" stop-color="#a6373f"/></linearGradient><linearGradient id="r63"><stop offset="0.000" stop-color="#6c2162"/><stop offset="0.077" stop-color="#6b2261"/><stop offset="0.154" stop-color="#6b2261"/><stop offset="0.231" stop-color="#6e2067"/><stop offset="0.308" stop-color="#731f6b"/><stop offset="0.385" stop-color="#782066"/><stop offset="0.462" stop-color="#80245d"/><stop offset="0.538" stop-color="#8b2952"/><stop offset="0.615" stop-color="#922d4a"/><stop offset="0.692" stop-color="#993143"/><stop offset="0.769" stop-color="#a03540"/><stop offset="0.846" stop-color="#a4363e"/><stop offset="0.923" stop-color="#a6363f"/><stop offset="1.000" stop-color="#a5373f"/></linearGradient><linearGradient id="r64"><stop offset="0.000" stop-color="#6c2162"/><stop offset="0.077" stop-color="#6b2261"/><stop offset="0.154" stop-color="#6b2162"/><stop offset="0.231" stop-color="#6e2067"/><stop offset="0.308" stop-color="#721f6b"/><stop offset="0.385" stop-color="#772067"/><stop offset="0.462" stop-color="#80245e"/><stop offset="0.538" stop-color="#8a2953"/><stop offset="0.615" stop-color="#912d4a"/><stop offset="0.692" stop-color="#993144"/><stop offset="0.769" stop-color="#9f3540"/><stop offset="0.846" stop-color="#a4363f"/><stop offset="0.923" stop-color="#a5363f"/><stop offset="1.000" stop-color="#a43640"/></linearGradient><linearGradient id="r65"><stop offset="0.000" stop-color="#6c2162"/><stop offset="0.077" stop-color="#6b2261"/><stop offset="0.154" stop-color="#6b2162"/><stop offset="0.231" stop-color="#6d2067"/><stop offset="0.308" stop-color="#721f6c"/><stop offset="0.385" stop-color="#772068"/><stop offset="0.462" stop-color="#7f245f"/><stop offset="0.538" stop-color="#8a2953"/><stop offset="0.615" stop-color="#912d4a"/><stop offset="0.692" stop-color="#983144"/><stop offset="0.769" stop-color="#9f3541"/><stop offset="0.846" stop-color="#a33640"/><stop offset="0.923" stop-color="#a43640"/><stop offset="1.000" stop-color="#a33640"/></linearGradient><linearGradient id="r66"><stop offset="0.000" stop-color="#6c2162"/><stop offset="0.077" stop-color="#6b2261"/><stop offset="0.154" stop-color="#6b2162"/><stop offset="0.231" stop-color="#6d2068"/><stop offset="0.308" stop-color="#721f6c"/><stop offset="0.385" stop-color="#762069"/><stop offset="0.462" stop-color="#7e235f"/><stop offset="0.538" stop-color="#892853"/><stop offset="0.615" stop-color="#912c4b"/><stop offset="0.692" stop-color="#983145"/><stop offset="0.769" stop-color="#9e3442"/><stop offset="0.846" stop-color="#a23540"/><stop offset="0.923" stop-color="#a33640"/><stop offset="1.000" stop-color="#a33641"/></linearGradient><linearGradient id="r67"><stop offset="0.000" stop-color="#6c2162"/><stop offset="0.077" stop-color="#6b2261"/><stop offset="0.154" stop-color="#6b2162"/><stop offset="0.231" stop-color="#6d2068"/><stop offset="0.308" stop-color="#711f6c"/><stop offset="0.385" stop-color="#75206a"/><stop offset="0.462" stop-color="#7e2360"/><stop offset="0.538" stop-color="#882854"/><stop offset="0.615" stop-color="#902c4b"/><stop offset="0.692" stop-color="#973045"/><stop offset="0.769" stop-color="#9d3442"/><stop offset="0.846" stop-color="#a13541"/><stop offset="0.923" stop-color="#a23541"/><stop offset="1.000" stop-color="#a23641"/></linearGradient><linearGradient id="r68"><stop offset="0.000" stop-color="#6c2162"/><stop offset="0.077" stop-color="#6b2261"/><stop offset="0.154" stop-color="#6b2163"/><stop offset="0.231" stop-color="#6d2068"/><stop offset="0.308" stop-color="#711f6d"/><stop offset="0.385" stop-color="#74206b"/><stop offset="0.462" stop-color="#7d2361"/><stop offset="0.538" stop-color="#882854"/><stop offset="0.615" stop-color="#902c4b"/><stop offset="0.692" stop-color="#963046"/><stop offset="0.769" stop-color="#9d3443"/><stop offset="0.846" stop-color="#a03541"/><stop offset="0.923" stop-color="#a13541"/><stop offset="1.000" stop-color="#a13542"/></linearGradient><linearGradient id="r69"><stop offset="0.000" stop-color="#6c2162"/><stop offset="0.077" stop-color="#6b2161"/><stop offset="0.154" stop-color="#6b2163"/><stop offset="0.231" stop-color="#6d2068"/><stop offset="0.308" stop-color="#701f6d"/><stop offset="0.385" stop-color="#74206b"/><stop offset="0.462" stop-color="#7c2361"/><stop offset="0.538" stop-color="#872755"/><stop offset="0.615" stop-color="#8f2b4c"/><stop offset="0.692" stop-color="#963046"/><stop offset="0.769" stop-color="#9c3443"/><stop offset="0.846" stop-color="#9f3542"/><stop offset="0.923" stop-color="#a13542"/><stop offset="1.000" stop-color="#a03542"/></linearGradient><linearGradient id="r70"><stop offset="0.000" stop-color="#6c2162"/><stop offset="0.077" stop-color="#6b2161"/><stop offset="0.154" stop-color="#6b2163"/><stop offset="0.231" stop-color="#6d2068"/><stop offset="0.308" stop-color="#701f6d"/><stop offset="0.385" stop-color="#73206c"/><stop offset="0.462" stop-color="#7c2362"/><stop offset="0.538" stop-color="#872755"/><stop offset="0.615" stop-color="#8f2b4c"/><stop offset="0.692" stop-color="#952f47"/><stop offset="0.769" stop-color="#9b3344"/><stop offset="0.846" stop-color="#9f3442"/><stop offset="0.923" stop-color="#a03542"/><stop offset="1.000" stop-color="#9f3543"/></linearGradient><linearGradient id="r71"><stop offset="0.000" stop-color="#6c2162"/><stop offset="0.077" stop-color="#6b2162"/><stop offset="0.154" stop-color="#6b2163"/><stop offset="0.231" stop-color="#6c2069"/><stop offset="0.308" stop-color="#6f1f6d"/><stop offset="0.385" stop-color="#731f6c"/><stop offset="0.462" stop-color="#7b2262"/><stop offset="0.538" stop-color="#862755"/><stop offset="0.615" stop-color="#8e2b4c"/><stop offset="0.692" stop-color="#952f47"/><stop offset="0.769" stop-color="#9a3344"/><stop offset="0.846" stop-color="#9e3443"/><stop offset="0.923" stop-color="#9f3443"/><stop offset="1.000" stop-color="#9e3443"/></linearGradient><linearGradient id="r72"><stop offset="0.000" stop-color="#6c2162"/><stop offset="0.077" stop-color="#6b2162"/><stop offset="0.154" stop-color="#6b2164"/><stop offset="0.231" stop-color="#6c2069"/><stop offset="0.308" stop-color="#6f1f6d"/><stop offset="0.385" stop-color="#721f6d"/><stop offset="0.462" stop-color="#7a2263"/><stop offset="0.538" stop-color="#852656"/><stop offset="0.615" stop-color="#8d2b4d"/><stop offset="0.692" stop-color="#942f48"/><stop offset="0.769" stop-color="#9a3345"/><stop offset="0.846" stop-color="#9d3444"/><stop offset="0.923" stop-color="#9e3443"/><stop offset="1.000" stop-color="#9e3443"/></linearGradient><linearGradient id="r73"><stop offset="0.000" stop-color="#6c2162"/><stop offset="0.077" stop-color="#6b2162"/><stop offset="0.154" stop-color="#6b2164"/><stop offset="0.231" stop-color="#6c2069"/><stop offset="0.308" stop-color="#6f1f6e"/><stop offset="0.385" stop-color="#721f6d"/><stop offset="0.462" stop-color="#7a2263"/><stop offset="0.538" stop-color="#852656"/><stop offset="0.615" stop-color="#8d2a4d"/><stop offset="0.692" stop-color="#942e48"/><stop offset="0.769" stop-color="#993245"/><stop offset="0.846" stop-color="#9c3344"/><stop offset="0.923" stop-color="#9d3444"/><stop offset="1.000" stop-color="#9d3444"/></linearGradient><linearGradient id="r74"><stop offset="0.000" stop-color="#6c2162"/><stop offset="0.077" stop-color="#6b2162"/><stop offset="0.154" stop-color="#6b2164"/><stop offset="0.231" stop-color="#6c1f69"/><stop offset="0.308" stop-color="#6e1e6e"/><stop offset="0.385" stop-color="#711f6d"/><stop offset="0.462" stop-color="#792263"/><stop offset="0.538" stop-color="#842656"/><stop offset="0.615" stop-color="#8c2a4d"/><stop offset="0.692" stop-color="#932e48"/><stop offset="0.769" stop-color="#983246"/><stop offset="0.846" stop-color="#9c3345"/><stop offset="0.923" stop-color="#9c3344"/><stop offset="1.000" stop-color="#9c3344"/></linearGradient><linearGradient id="r75"><stop offset="0.000" stop-color="#6c2162"/><stop offset="0.077" stop-color="#6b2162"/><stop offset="0.154" stop-color="#6b2164"/><stop offset="0.231" stop-color="#6c1f69"/><stop offset="0.308" stop-color="#6e1e6e"/><stop offset="0.385" stop-color="#711f6d"/><stop offset="0.462" stop-color="#792263"/><stop offset="0.538" stop-color="#842556"/><stop offset="0.615" stop-color="#8c294e"/><stop offset="0.692" stop-color="#922e49"/><stop offset="0.769" stop-color="#983146"/><stop offset="0.846" stop-color="#9b3345"/><stop offset="0.923" stop-color="#9c3345"/><stop offset="1.000" stop-color="#9b3345"/></linearGradient><linearGradient id="r76"><stop offset="0.000" stop-color="#6c2162"/><stop offset="0.077" stop-color="#6b2162"/><stop offset="0.154" stop-color="#6b2164"/><stop offset="0.231" stop-color="#6c1f69"/><stop offset="0.308" stop-color="#6e1e6e"/><stop offset="0.385" stop-color="#711f6d"/><stop offset="0.462" stop-color="#782163"/><stop offset="0.538" stop-color="#832556"/><stop offset="0.615" stop-color="#8b294e"/><stop offset="0.692" stop-color="#922d49"/><stop offset="0.769" stop-color="#973147"/><stop offset="0.846" stop-color="#9a3246"/><stop offset="0.923" stop-color="#9b3245"/><stop offset="1.000" stop-color="#9a3345"/></linearGradient><linearGradient id="r77"><stop offset="0.000" stop-color="#6c2162"/><stop offset="0.077" stop-color="#6b2162"/><stop offset="0.154" stop-color="#6b2065"/><stop offset="0.231" stop-color="#6b1f6a"/><stop offset="0.308" stop-color="#6d1e6e"/><stop offset="0.385" stop-color="#701f6d"/><stop offset="0.462" stop-color="#782163"/><stop offset="0.538" stop-color="#822557"/><stop offset="0.615" stop-color="#8b294e"/><stop offset="0.692" stop-color="#912d4a"/><stop offset="0.769" stop-color="#963047"/><stop offset="0.846" stop-color="#993246"/><stop offset="0.923" stop-color="#9a3246"/><stop offset="1.000" stop-color="#9a3246"/></linearGradient><linearGradient id="r78"><stop offset="0.000" stop-color="#6c2162"/><stop offset="0.077" stop-color="#6b2162"/><stop offset="0.154" stop-color="#6b2065"/><stop offset="0.231" stop-color="#6b1f6a"/><stop offset="0.308" stop-color="#6d1e6e"/><stop offset="0.385" stop-color="#701f6d"/><stop offset="0.462" stop-color="#782163"/><stop offset="0.538" stop-color="#822457"/><stop offset="0.615" stop-color="#8a284e"/><stop offset="0.692" stop-color="#912d4a"/><stop offset="0.769" stop-color="#963048"/><stop offset="0.846" stop-color="#983147"/><stop offset="0.923" stop-color="#993246"/><stop offset="1.000" stop-color="#993246"/></linearGradient><linearGradient id="r79"><stop offset="0.000" stop-color="#6c2162"/><stop offset="0.077" stop-color="#6b2162"/><stop offset="0.154" stop-color="#6b2065"/><stop offset="0.231" stop-color="#6b1f6a"/><stop offset="0.308" stop-color="#6d1e6e"/><stop offset="0.385" stop-color="#701e6d"/><stop offset="0.462" stop-color="#772163"/><stop offset="0.538" stop-color="#812457"/><stop offset="0.615" stop-color="#89284f"/><stop offset="0.692" stop-color="#902c4a"/><stop offset="0.769" stop-color="#952f48"/><stop offset="0.846" stop-color="#983147"/><stop offset="0.923" stop-color="#983147"/><stop offset="1.000" stop-color="#983146"/></linearGradient><linearGradient id="r80"><stop offset="0.000" stop-color="#6c2162"/><stop offset="0.077" stop-color="#6b2162"/><stop offset="0.154" stop-color="#6b2065"/><stop offset="0.231" stop-color="#6b1f6a"/><stop offset="0.308" stop-color="#6d1e6e"/><stop offset="0.385" stop-color="#6f1e6d"/><stop offset="0.462" stop-color="#772063"/><stop offset="0.538" stop-color="#812457"/><stop offset="0.615" stop-color="#89284f"/><stop offset="0.692" stop-color="#8f2c4b"/><stop offset="0.769" stop-color="#942f49"/><stop offset="0.846" stop-color="#973048"/><stop offset="0.923" stop-color="#973147"/><stop offset="1.000" stop-color="#973147"/></linearGradient><linearGradient id="r81"><stop offset="0.000" stop-color="#6c2162"/><stop offset="0.077" stop-color="#6b2162"/><stop offset="0.154" stop-color="#6b2065"/><stop offset="0.231" stop-color="#6b1f6a"/><stop offset="0.308" stop-color="#6c1e6e"/><stop offset="0.385" stop-color="#6f1e6c"/><stop offset="0.462" stop-color="#762063"/><stop offset="0.538" stop-color="#802357"/><stop offset="0.615" stop-color="#88274f"/><stop offset="0.692" stop-color="#8f2b4b"/><stop offset="0.769" stop-color="#932f49"/><stop offset="0.846" stop-color="#963048"/><stop offset="0.923" stop-color="#973148"/><stop offset="1.000" stop-color="#963147"/></linearGradient><linearGradient id="r82"><stop offset="0.000" stop-color="#6c2162"/><stop offset="0.077" stop-color="#6b2162"/><stop offset="0.154" stop-color="#6a2065"/><stop offset="0.231" stop-color="#6b1f6a"/><stop offset="0.308" stop-color="#6c1e6d"/><stop offset="0.385" stop-color="#6f1e6c"/><stop offset="0.462" stop-color="#762063"/><stop offset="0.538" stop-color="#802357"/><stop offset="0.615" stop-color="#88274f"/><stop offset="0.692" stop-color="#8e2b4c"/><stop offset="0.769" stop-color="#932e4a"/><stop offset="0.846" stop-color="#953049"/><stop offset="0.923" stop-color="#963048"/><stop offset="1.000" stop-color="#953047"/></linearGradient><linearGradient id="r83"><stop offset="0.000" stop-color="#6c2162"/><stop offset="0.077" stop-color="#6b2162"/><stop offset="0.154" stop-color="#6a2065"/><stop offset="0.231" stop-color="#6b1f6a"/><stop offset="0.308" stop-color="#6c1e6d"/><stop offset="0.385" stop-color="#6f1e6c"/><stop offset="0.462" stop-color="#762063"/><stop offset="0.538" stop-color="#7f2257"/><stop offset="0.615" stop-color="#872650"/><stop offset="0.692" stop-color="#8d2a4c"/><stop offset="0.769" stop-color="#922d4a"/><stop offset="0.846" stop-color="#942f49"/><stop offset="0.923" stop-color="#953048"/><stop offset="1.000" stop-color="#953048"/></linearGradient><linearGradient id="r84"><stop offset="0.000" stop-color="#6c2162"/><stop offset="0.077" stop-color="#6b2162"/><stop offset="0.154" stop-color="#6a2065"/><stop offset="0.231" stop-color="#6a1f6a"/><stop offset="0.308" stop-color="#6c1e6d"/><stop offset="0.385" stop-color="#6f1e6c"/><stop offset="0.462" stop-color="#751f63"/><stop offset="0.538" stop-color="#7f2257"/><stop offset="0.615" stop-color="#862650"/><stop offset="0.692" stop-color="#8d2a4c"/><stop offset="0.769" stop-color="#912d4b"/><stop offset="0.846" stop-color="#942f4a"/><stop offset="0.923" stop-color="#942f49"/><stop offset="1.000" stop-color="#943048"/></linearGradient><linearGradient id="r85"><stop offset="0.000" stop-color="#6c2162"/><stop offset="0.077" stop-color="#6b2163"/><stop offset="0.154" stop-color="#6a2065"/><stop offset="0.231" stop-color="#6a1e6a"/><stop offset="0.308" stop-color="#6b1d6d"/><stop offset="0.385" stop-color="#6e1e6b"/><stop offset="0.462" stop-color="#751f63"/><stop offset="0.538" stop-color="#7e2257"/><stop offset="0.615" stop-color="#862650"/><stop offset="0.692" stop-color="#8c294d"/><stop offset="0.769" stop-color="#912c4b"/><stop offset="0.846" stop-color="#932e4a"/><stop offset="0.923" stop-color="#932f49"/><stop offset="1.000" stop-color="#932f48"/></linearGradient><linearGradient id="r86"><stop offset="0.000" stop-color="#6c2162"/><stop offset="0.077" stop-color="#6b2163"/><stop offset="0.154" stop-color="#6a2066"/><stop offset="0.231" stop-color="#6a1e6a"/><stop offset="0.308" stop-color="#6b1d6d"/><stop offset="0.385" stop-color="#6e1d6b"/><stop offset="0.462" stop-color="#751f62"/><stop offset="0.538" stop-color="#7e2157"/><stop offset="0.615" stop-color="#852550"/><stop offset="0.692" stop-color="#8b294d"/><stop offset="0.769" stop-color="#902c4c"/><stop offset="0.846" stop-color="#922e4a"/><stop offset="0.923" stop-color="#922e4a"/><stop offset="1.000" stop-color="#922f49"/></linearGradient><linearGradient id="r87"><stop offset="0.000" stop-color="#6c2162"/><stop offset="0.077" stop-color="#6b2163"/><stop offset="0.154" stop-color="#6a2066"/><stop offset="0.231" stop-color="#6a1e6a"/><stop offset="0.308" stop-color="#6b1d6d"/><stop offset="0.385" stop-color="#6e1d6b"/><stop offset="0.462" stop-color="#741f62"/><stop offset="0.538" stop-color="#7d2157"/><stop offset="0.615" stop-color="#852550"/><stop offset="0.692" stop-color="#8b294d"/><stop offset="0.769" stop-color="#8f2b4c"/><stop offset="0.846" stop-color="#912d4b"/><stop offset="0.923" stop-color="#922e4a"/><stop offset="1.000" stop-color="#912e49"/></linearGradient><linearGradient id="r88"><stop offset="0.000" stop-color="#6c2162"/><stop offset="0.077" stop-color="#6b2163"/><stop offset="0.154" stop-color="#6a1f66"/><stop offset="0.231" stop-color="#6a1e6a"/><stop offset="0.308" stop-color="#6b1d6c"/><stop offset="0.385" stop-color="#6e1d6b"/><stop offset="0.462" stop-color="#741e62"/><stop offset="0.538" stop-color="#7d2157"/><stop offset="0.615" stop-color="#842451"/><stop offset="0.692" stop-color="#8a284e"/><stop offset="0.769" stop-color="#8f2b4c"/><stop offset="0.846" stop-color="#912d4b"/><stop offset="0.923" stop-color="#912e4a"/><stop offset="1.000" stop-color="#902e49"/></linearGradient><linearGradient id="r89"><stop offset="0.000" stop-color="#6c2162"/><stop offset="0.077" stop-color="#6b2063"/><stop offset="0.154" stop-color="#6a1f66"/><stop offset="0.231" stop-color="#6a1e6a"/><stop offset="0.308" stop-color="#6b1d6c"/><stop offset="0.385" stop-color="#6e1d6a"/><stop offset="0.462" stop-color="#741e62"/><stop offset="0.538" stop-color="#7c2057"/><stop offset="0.615" stop-color="#842451"/><stop offset="0.692" stop-color="#8a284e"/><stop offset="0.769" stop-color="#8e2a4d"/><stop offset="0.846" stop-color="#902c4c"/><stop offset="0.923" stop-color="#902d4b"/><stop offset="1.000" stop-color="#902e4a"/></linearGradient><linearGradient id="r90"><stop offset="0.000" stop-color="#6c2162"/><stop offset="0.077" stop-color="#6b2063"/><stop offset="0.154" stop-color="#6a1f66"/><stop offset="0.231" stop-color="#6a1e6a"/><stop offset="0.308" stop-color="#6b1d6c"/><stop offset="0.385" stop-color="#6d1d6a"/><stop offset="0.462" stop-color="#731e62"/><stop offset="0.538" stop-color="#7c2057"/><stop offset="0.615" stop-color="#832451"/><stop offset="0.692" stop-color="#89274e"/><stop offset="0.769" stop-color="#8d2a4d"/><stop offset="0.846" stop-color="#8f2c4c"/><stop offset="0.923" stop-color="#8f2d4b"/><stop offset="1.000" stop-color="#8f2d4a"/></linearGradient><linearGradient id="r91"><stop offset="0.000" stop-color="#6c2162"/><stop offset="0.077" stop-color="#6b2063"/><stop offset="0.154" stop-color="#6a1f66"/><stop offset="0.231" stop-color="#6a1e6a"/><stop offset="0.308" stop-color="#6a1d6c"/><stop offset="0.385" stop-color="#6d1d6a"/><stop offset="0.462" stop-color="#731e61"/><stop offset="0.538" stop-color="#7b2057"/><stop offset="0.615" stop-color="#822351"/><stop offset="0.692" stop-color="#88274f"/><stop offset="0.769" stop-color="#8c2a4d"/><stop offset="0.846" stop-color="#8e2b4c"/><stop offset="0.923" stop-color="#8f2c4b"/><stop offset="1.000" stop-color="#8e2d4a"/></linearGradient><linearGradient id="r92"><stop offset="0.000" stop-color="#6c2162"/><stop offset="0.077" stop-color="#6b2063"/><stop offset="0.154" stop-color="#6a1f66"/><stop offset="0.231" stop-color="#6a1e69"/><stop offset="0.308" stop-color="#6a1d6c"/><stop offset="0.385" stop-color="#6d1d69"/><stop offset="0.462" stop-color="#731d61"/><stop offset="0.538" stop-color="#7b1f57"/><stop offset="0.615" stop-color="#822351"/><stop offset="0.692" stop-color="#88264f"/><stop offset="0.769" stop-color="#8c294e"/><stop offset="0.846" stop-color="#8e2b4d"/><stop offset="0.923" stop-color="#8e2c4c"/><stop offset="1.000" stop-color="#8d2c4b"/></linearGradient><linearGradient id="r93"><stop offset="0.000" stop-color="#6c2162"/><stop offset="0.077" stop-color="#6b2063"/><stop offset="0.154" stop-color="#6a1f66"/><stop offset="0.231" stop-color="#691e69"/><stop offset="0.308" stop-color="#6a1d6b"/><stop offset="0.385" stop-color="#6d1c69"/><stop offset="0.462" stop-color="#731d61"/><stop offset="0.538" stop-color="#7a1f57"/><stop offset="0.615" stop-color="#812352"/><stop offset="0.692" stop-color="#87264f"/><stop offset="0.769" stop-color="#8b294e"/><stop offset="0.846" stop-color="#8d2b4d"/><stop offset="0.923" stop-color="#8d2c4c"/><stop offset="1.000" stop-color="#8d2c4b"/></linearGradient><linearGradient id="r94"><stop offset="0.000" stop-color="#6b2162"/><stop offset="0.077" stop-color="#6b2063"/><stop offset="0.154" stop-color="#6a1f66"/><stop offset="0.231" stop-color="#691e69"/><stop offset="0.308" stop-color="#6a1c6b"/><stop offset="0.385" stop-color="#6d1c69"/><stop offset="0.462" stop-color="#721d61"/><stop offset="0.538" stop-color="#7a1f57"/><stop offset="0.615" stop-color="#812252"/><stop offset="0.692" stop-color="#862650"/><stop offset="0.769" stop-color="#8a284f"/><stop offset="0.846" stop-color="#8c2a4d"/><stop offset="0.923" stop-color="#8c2b4c"/><stop offset="1.000" stop-color="#8c2c4b"/></linearGradient></defs><rect y="0" width="1690" height="11" fill="url(#r0)"/><rect y="10" width="1690" height="11" fill="url(#r1)"/><rect y="20" width="1690" height="11" fill="url(#r2)"/><rect y="30" width="1690" height="11" fill="url(#r3)"/><rect y="40" width="1690" height="11" fill="url(#r4)"/><rect y="50" width="1690" height="11" fill="url(#r5)"/><rect y="60" width="1690" height="11" fill="url(#r6)"/><rect y="70" width="1690" height="11" fill="url(#r7)"/><rect y="80" width="1690" height="11" fill="url(#r8)"/><rect y="90" width="1690" height="11" fill="url(#r9)"/><rect y="100" width="1690" height="11" fill="url(#r10)"/><rect y="110" width="1690" height="11" fill="url(#r11)"/><rect y="120" width="1690" height="11" fill="url(#r12)"/><rect y="130" width="1690" height="11" fill="url(#r13)"/><rect y="140" width="1690" height="11" fill="url(#r14)"/><rect y="150" width="1690" height="11" fill="url(#r15)"/><rect y="160" width="1690" height="11" fill="url(#r16)"/><rect y="170" width="1690" height="11" fill="url(#r17)"/><rect y="180" width="1690" height="11" fill="url(#r18)"/><rect y="190" width="1690" height="11" fill="url(#r19)"/><rect y="200" width="1690" height="11" fill="url(#r20)"/><rect y="210" width="1690" height="11" fill="url(#r21)"/><rect y="220" width="1690" height="11" fill="url(#r22)"/><rect y="230" width="1690" height="11" fill="url(#r23)"/><rect y="240" width="1690" height="11" fill="url(#r24)"/><rect y="250" width="1690" height="11" fill="url(#r25)"/><rect y="260" width="1690" height="11" fill="url(#r26)"/><rect y="270" width="1690" height="11" fill="url(#r27)"/><rect y="280" width="1690" height="11" fill="url(#r28)"/><rect y="290" width="1690" height="11" fill="url(#r29)"/><rect y="300" width="1690" height="11" fill="url(#r30)"/><rect y="310" width="1690" height="11" fill="url(#r31)"/><rect y="320" width="1690" height="11" fill="url(#r32)"/><rect y="330" width="1690" height="11" fill="url(#r33)"/><rect y="340" width="1690" height="11" fill="url(#r34)"/><rect y="350" width="1690" height="11" fill="url(#r35)"/><rect y="360" width="1690" height="11" fill="url(#r36)"/><rect y="370" width="1690" height="11" fill="url(#r37)"/><rect y="380" width="1690" height="11" fill="url(#r38)"/><rect y="390" width="1690" height="11" fill="url(#r39)"/><rect y="400" width="1690" height="11" fill="url(#r40)"/><rect y="410" width="1690" height="11" fill="url(#r41)"/><rect y="420" width="1690" height="11" fill="url(#r42)"/><rect y="430" width="1690" height="11" fill="url(#r43)"/><rect y="440" width="1690" height="11" fill="url(#r44)"/><rect y="450" width="1690" height="11" fill="url(#r45)"/><rect y="460" width="1690" height="11" fill="url(#r46)"/><rect y="470" width="1690" height="11" fill="url(#r47)"/><rect y="480" width="1690" height="11" fill="url(#r48)"/><rect y="490" width="1690" height="11" fill="url(#r49)"/><rect y="500" width="1690" height="11" fill="url(#r50)"/><rect y="510" width="1690" height="11" fill="url(#r51)"/><rect y="520" width="1690" height="11" fill="url(#r52)"/><rect y="530" width="1690" height="11" fill="url(#r53)"/><rect y="540" width="1690" height="11" fill="url(#r54)"/><rect y="550" width="1690" height="11" fill="url(#r55)"/><rect y="560" width="1690" height="11" fill="url(#r56)"/><rect y="570" width="1690" height="11" fill="url(#r57)"/><rect y="580" width="1690" height="11" fill="url(#r58)"/><rect y="590" width="1690" height="11" fill="url(#r59)"/><rect y="600" width="1690" height="11" fill="url(#r60)"/><rect y="610" width="1690" height="11" fill="url(#r61)"/><rect y="620" width="1690" height="11" fill="url(#r62)"/><rect y="630" width="1690" height="11" fill="url(#r63)"/><rect y="640" width="1690" height="11" fill="url(#r64)"/><rect y="650" width="1690" height="11" fill="url(#r65)"/><rect y="660" width="1690" height="11" fill="url(#r66)"/><rect y="670" width="1690" height="11" fill="url(#r67)"/><rect y="680" width="1690" height="11" fill="url(#r68)"/><rect y="690" width="1690" height="11" fill="url(#r69)"/><rect y="700" width="1690" height="11" fill="url(#r70)"/><rect y="710" width="1690" height="11" fill="url(#r71)"/><rect y="720" width="1690" height="11" fill="url(#r72)"/><rect y="730" width="1690" height="11" fill="url(#r73)"/><rect y="740" width="1690" height="11" fill="url(#r74)"/><rect y="750" width="1690" height="11" fill="url(#r75)"/><rect y="760" width="1690" height="11" fill="url(#r76)"/><rect y="770" width="1690" height="11" fill="url(#r77)"/><rect y="780" width="1690" height="11" fill="url(#r78)"/><rect y="790" width="1690" height="11" fill="url(#r79)"/><rect y="800" width="1690" height="11" fill="url(#r80)"/><rect y="810" width="1690" height="11" fill="url(#r81)"/><rect y="820" width="1690" height="11" fill="url(#r82)"/><rect y="830" width="1690" height="11" fill="url(#r83)"/><rect y="840" width="1690" height="11" fill="url(#r84)"/><rect y="850" width="1690" height="11" fill="url(#r85)"/><rect y="860" width="1690" height="11" fill="url(#r86)"/><rect y="870" width="1690" height="11" fill="url(#r87)"/><rect y="880" width="1690" height="11" fill="url(#r88)"/><rect y="890" width="1690" height="11" fill="url(#r89)"/><rect y="900" width="1690" height="11" fill="url(#r90)"/><rect y="910" width="1690" height="11" fill="url(#r91)"/><rect y="920" width="1690" height="11" fill="url(#r92)"/><rect y="930" width="1690" height="11" fill="url(#r93)"/><rect y="940" width="1690" height="11" fill="url(#r94)"/><polygon points="364,711 50,0 1075,0" fill="rgba(255,150,255,0.035)"/><polygon points="125,950 364,711 900,950" fill="rgba(20,0,20,0.05)"/><polygon points="1378,0 1558,423 1355,950 1690,950 1690,0" fill="rgba(255,120,60,0.12)"/><polygon points="1690,133 1558,423 1690,386" fill="rgba(255,150,90,0.11)"/>
</svg>
<div id="panel">
 <div class="a" style="left:6px;top:3px;font-size:13px;font-weight:bold;color:#e4e0d8;line-height:16px">Terminal</div>
 <svg class="a" style="left:1472px;top:4px" width="18" height="14" viewBox="0 0 18 14">
  <g fill="none" stroke="#d8d4cc" stroke-width="1.6" stroke-linecap="round">
   <path d="M1.5 5.2 Q9 -1.5 16.5 5.2"/><path d="M4 8 Q9 3.5 14 8"/><path d="M6.5 10.6 Q9 8.6 11.5 10.6"/>
  </g><circle cx="9" cy="12.6" r="1.3" fill="#d8d4cc"/>
 </svg>
 <div class="a" style="left:1501px;top:2px;width:18px;height:17px;background:#dcd8cf;border-radius:2px;color:#3a3935;font-size:11.5px;font-weight:bold;line-height:17px;text-align:center;letter-spacing:-.2px">En</div>
 <svg class="a" style="left:1527px;top:3px" width="10" height="16" viewBox="0 0 10 16">
  <path d="M2 4.5 L8 10.5 L5 13.5 V2.5 L8 5.5 L2 11.5" fill="none" stroke="#d8d4cc" stroke-width="1.5" stroke-linejoin="round"/>
 </svg>
 <svg class="a" style="left:1547px;top:4px" width="24" height="13" viewBox="0 0 24 13">
  <rect x="1" y="1" width="19.5" height="11" rx="1.5" fill="none" stroke="#bdb9b1" stroke-width="1.5"/>
  <rect x="21" y="4" width="2" height="5" fill="#bdb9b1"/>
  <rect x="2.8" y="2.8" width="15.9" height="7.4" fill="#8d8a83"/>
  <path d="M6.5 8.2 L10.8 4.6 L10.6 6.3 L14.5 4.6 L10.2 8.4 L10.4 6.7 Z" fill="#f0ece4"/>
 </svg>
 <svg class="a" style="left:1579px;top:3px" width="19" height="16" viewBox="0 0 19 16">
  <path d="M1 5.5 H4 L8.5 1.5 V14.5 L4 10.5 H1 Z" fill="#dcd8d0"/>
  <g fill="none" stroke="#d8d4cc" stroke-width="1.5" stroke-linecap="round">
   <path d="M10.6 5.5 Q12 8 10.6 10.5"/><path d="M12.8 3.5 Q15.4 8 12.8 12.5"/><path d="M15 1.5 Q18.8 8 15 14.5" stroke-width="1.2" opacity=".75"/>
  </g>
 </svg>
 <div class="a" style="left:1610px;top:3px;font-size:12.6px;color:#dfdbd2;line-height:16px">4:13 PM</div>
 <svg class="a" style="left:1666px;top:2px" width="19" height="19" viewBox="0 0 19 19">
  <path d="M8 1.5 H11 L11.6 3.6 L13.6 4.5 L15.5 3.4 L17.6 5.5 L16.5 7.4 L17.4 9.4 L19 10 V9 M17.5 8 V11 L15.4 11.6 L14.5 13.6 L15.6 15.5 L13.5 17.6 L11.6 16.5 L9.6 17.4 L9 19 H8 M11 17.5 H8 L7.4 15.4 L5.4 14.5 L3.5 15.6 L1.4 13.5 L2.5 11.6 L1.6 9.6 L0 9 M1.5 11 V8 L3.6 7.4 L4.5 5.4 L3.4 3.5 L5.5 1.4 L7.4 2.5 L8 1.5" fill="none" stroke="#dcd8d0" stroke-width="1.5" stroke-linejoin="round"/>
  <path d="M7 6.8 A3.6 3.6 0 1 0 12 6.8" fill="none" stroke="#dcd8d0" stroke-width="1.5"/>
  <rect x="8.75" y="4.3" width="1.5" height="5" fill="#dcd8d0"/>
 </svg>
</div>

<div id="launcher">
 <div class="a" style="left:0;top:0;width:57px;height:4px;background:linear-gradient(rgba(0,0,0,.35),rgba(0,0,0,0))"></div>
 <!-- dash -->
 <div class="tile" style="top:4px">
  <svg width="46" height="46" viewBox="0 0 46 46">
   <defs><radialGradient id="dg" cx="50%" cy="50%" r="60%"><stop offset="0" stop-color="#d79ad0"/><stop offset=".45" stop-color="#b248a8"/><stop offset="1" stop-color="#8c2686"/></radialGradient></defs>
   <rect x="0.5" y="0.5" width="45" height="45" rx="5" fill="url(#dg)" stroke="rgba(255,255,255,.25)"/>
   <path d="M7 30 Q8 10 26 8 Q40 8 40 20" fill="none" stroke="rgba(255,255,255,.12)" stroke-width="4" stroke-linecap="round"/>
   <path d="M40 17 Q38 38 20 38 Q8 36 7 26" fill="none" stroke="rgba(255,255,255,.1)" stroke-width="3" stroke-linecap="round"/>
   <circle cx="23" cy="23" r="12.3" fill="#fff"/>
   <circle cx="23" cy="23" r="6.4" fill="none" stroke="#3e1238" stroke-width="1.9"/>
   <g fill="#fff"><circle cx="15.2" cy="23" r="3.1"/><circle cx="26.9" cy="16.25" r="3.1"/><circle cx="26.9" cy="29.75" r="3.1"/></g>
   <g fill="#3e1238"><circle cx="15.2" cy="23" r="2"/><circle cx="26.9" cy="16.25" r="2"/><circle cx="26.9" cy="29.75" r="2"/></g>
  </svg>
 </div>
 <!-- updater -->
 <div class="tile" style="top:56px">
  <div class="bg" style="background:linear-gradient(#9a5a9a,#7a3a78 40%,#6e2e6c)"></div>
  <svg width="46" height="46" viewBox="0 0 46 46">
   <defs><linearGradient id="ubase"><stop offset="0" stop-color="#3a3a3a"/><stop offset=".6" stop-color="#a8a8a8"/><stop offset="1" stop-color="#707070"/></linearGradient></defs>
   <path d="M11.8 10 H37.8 L42.5 34.5 H3 Z" fill="#e2e2e2"/>
   <rect x="3" y="34.5" width="39.5" height="4.5" fill="url(#ubase)"/>
   <rect x="8" y="35.6" width="3" height="2" fill="#111"/>
   <circle cx="9.5" cy="9" r="2.6" fill="#f2a878"/><circle cx="15" cy="6" r="2.6" fill="#f4b890"/><circle cx="21.5" cy="5" r="2.6" fill="#f6c4a0"/>
   <path d="M4.5 15 Q8 24 15 27 Q22 29 28 25" fill="none" stroke="#e8702a" stroke-width="4.5" stroke-linecap="round"/>
   <circle cx="3.8" cy="14.2" r="2.8" fill="#f08a4a"/>
   <path d="M21 19 Q26 11 33 14 Q38 17 37.5 23" fill="none" stroke="#a8d868" stroke-width="5.5"/>
   <path d="M31.5 21.5 H43 L37 30.5 Z" fill="#90c850"/>
  </svg>
 </div>
 <!-- files -->
 <div class="tile" style="top:108px">
  <div class="bg" style="background:linear-gradient(#b2667e,#96415c 40%,#8a3652)"></div>
  <svg width="46" height="46" viewBox="0 0 46 46">
   <rect x="8" y="4" width="30" height="38" rx="2" fill="#cfcfcf"/>
   <rect x="8" y="4" width="30" height="6" rx="2" fill="#ececec"/>
   <rect x="10" y="9" width="26" height="7" fill="#3a3a3a"/>
   <rect x="11" y="11" width="24" height="5" fill="#f4b080"/>
   <rect x="8" y="17" width="30" height="25" fill="#b8b8b8"/>
   <rect x="18" y="26" width="10" height="6" rx="1" fill="#e8e8e8" stroke="#6a6a6a" stroke-width="1"/>
  </svg>
 </div>
 <!-- firefox -->
 <div class="tile" style="top:160px">
  <div class="bg" style="background:linear-gradient(#9a5aa0,#7a3482 45%,#6c2a74)"></div>
  <svg width="46" height="46" viewBox="0 0 46 46">
   <defs><radialGradient id="ffb" cx="45%" cy="20%" r="80%"><stop offset="0" stop-color="#7ad8f4"/><stop offset=".45" stop-color="#2a8ad0"/><stop offset="1" stop-color="#142a78"/></radialGradient>
   <linearGradient id="ffo" x1="1" y1="0.2" x2="0.1" y2="1"><stop offset="0" stop-color="#fff070"/><stop offset=".3" stop-color="#f8b020"/><stop offset=".6" stop-color="#f06a20"/><stop offset="1" stop-color="#e0501a"/></linearGradient></defs>
   <circle cx="23.3" cy="23" r="18.5" fill="url(#ffo)"/>
   <circle cx="25.5" cy="19.5" r="14" fill="url(#ffb)"/>
   <path d="M6 9 Q9 5 13 9 Q18 15 22 17 Q19 24 24 28 Q30 31 34 27 Q32 35 23 35 Q11 34 8 24 Q5 16 6 9 Z" fill="#ec6a26"/>
   <path d="M22 17 Q26 18 26 21 Q23 21 22 17 Z" fill="#f0a060"/>
  </svg>
 </div>
 <!-- writer -->
 <div class="tile" style="top:212px">
  <div class="bg" style="background:linear-gradient(#8a5a9a,#6a3474 45%,#622c6c)"></div>
  <svg width="46" height="46" viewBox="0 0 46 46">
   <path d="M6 4 H31 L41 14 V43 H6 Z" fill="#1c4a86"/>
   <path d="M8.5 6.5 H30 L38.5 15 V40.5 H8.5 Z" fill="#f2f2f2"/>
   <path d="M31 4 L41 4 L41 14 Z" fill="#4a90c8"/>
   <g fill="#1c4a86"><rect x="13" y="18" width="7" height="2"/><rect x="13" y="22" width="7" height="2"/><rect x="13" y="26" width="20" height="2"/><rect x="13" y="30" width="20" height="2"/><rect x="13" y="34" width="14" height="2"/></g>
   <rect x="22" y="16" width="11" height="8" fill="#2a3a4a"/><path d="M22 24 L26 19 L29 22 L33 18 V24 Z" fill="#8ab0d0"/>
  </svg>
 </div>
 <!-- calc -->
 <div class="tile" style="top:264px">
  <div class="bg" style="background:linear-gradient(#8a5a9a,#6a3474 45%,#622c6c)"></div>
  <svg width="46" height="46" viewBox="0 0 46 46">
   <path d="M6 4 H31 L41 14 V43 H6 Z" fill="#2c7a2a"/>
   <path d="M8.5 6.5 H30 L38.5 15 V40.5 H8.5 Z" fill="#f2f2f2"/>
   <path d="M31 4 L41 4 L41 14 Z" fill="#5ab84a"/>
   <g fill="#3aa83a"><rect x="12" y="17" width="22" height="18"/></g>
   <g fill="#b8eab0"><rect x="13" y="20" width="6" height="2"/><rect x="20" y="20" width="6" height="2"/><rect x="27" y="20" width="6" height="2"/><rect x="13" y="24" width="6" height="2"/><rect x="20" y="24" width="6" height="2"/><rect x="27" y="24" width="6" height="2"/><rect x="13" y="28" width="6" height="2"/><rect x="20" y="28" width="6" height="2"/><rect x="13" y="32" width="6" height="2"/></g>
   <rect x="27" y="28" width="8" height="9" fill="#e09a50"/><rect x="28" y="31" width="3" height="6" fill="#4a8ad0"/>
  </svg>
 </div>
 <!-- impress -->
 <div class="tile" style="top:316px">
  <div class="bg" style="background:linear-gradient(#9a5a8a,#7a3462 45%,#6e2c5c)"></div>
  <svg width="46" height="46" viewBox="0 0 46 46">
   <path d="M6 4 H31 L41 14 V43 H6 Z" fill="#a8401a"/>
   <path d="M8.5 6.5 H30 L38.5 15 V40.5 H8.5 Z" fill="#f2f2f2"/>
   <path d="M31 4 L41 4 L41 14 Z" fill="#e07a40"/>
   <rect x="12" y="19" width="22" height="14" fill="#f6c8a8" stroke="#c05a2a" stroke-width="1.2"/>
   <g fill="#c05a2a"><rect x="14" y="22" width="6" height="1.6"/><rect x="14" y="25" width="6" height="1.6"/><rect x="14" y="28" width="6" height="1.6"/></g>
   <rect x="22" y="22" width="9" height="7" fill="#5aa04a"/>
   <path d="M23 37 L23 34 M17 39 L23 34 L29 39" stroke="#505050" stroke-width="1" fill="none"/>
  </svg>
 </div>
 <!-- software center -->
 <div class="tile" style="top:368px">
  <div class="bg" style="background:linear-gradient(#8a4a8a,#6e2e6c 45%,#662a66)"></div>
  <svg width="46" height="46" viewBox="0 0 46 46">
   <path d="M16 12 Q16 5 23 5 Q30 5 30 12" fill="none" stroke="#f09060" stroke-width="2"/>
   <path d="M6 10 H40 L41 41 H5 Z" fill="#f07838"/>
   <path d="M6 10 H40 L40.5 20 H5.5 Z" fill="#f48a4a"/>
   <path d="M23 15 L14 35 H18 L23 24 L28 35 H32 Z" fill="#fde0c8"/>
   <rect x="13" y="27" width="20" height="3" fill="#fde0c8"/>
  </svg>
 </div>
 <!-- amazon -->
 <div class="tile" style="top:420px">
  <div class="bg" style="background:linear-gradient(#8a4a8a,#6e2e6c 45%,#662a66)"></div>
  <svg width="46" height="46" viewBox="0 0 46 46">
   <rect x="6" y="5" width="35" height="35" rx="2.5" fill="#f2f2f2"/>
   <text x="23.5" y="30" text-anchor="middle" font-family="Liberation Sans" font-weight="bold" font-size="27" fill="#1a1a1a">a</text>
   <path d="M11 33 Q23 39 35 33" fill="none" stroke="#f0a020" stroke-width="2.5" stroke-linecap="round"/>
  </svg>
 </div>
 <!-- settings -->
 <div class="tile" style="top:472px">
  <div class="bg" style="background:linear-gradient(#8a4a8a,#6e2e6c 45%,#662a66)"></div>
  <svg width="46" height="46" viewBox="0 0 46 46">
   <g transform="translate(22.7 22.5)" fill="#e6e6e6">
    <circle r="14.5"/>
    <g id="teeth"><rect x="-3.6" y="-19" width="7.2" height="7"/><rect x="-3.6" y="12" width="7.2" height="7"/><rect x="-19" y="-3.6" width="7" height="7.2"/><rect x="12" y="-3.6" width="7" height="7.2"/></g>
    <g transform="rotate(45)"><rect x="-3.6" y="-19" width="7.2" height="7"/><rect x="-3.6" y="12" width="7.2" height="7"/><rect x="-19" y="-3.6" width="7" height="7.2"/><rect x="12" y="-3.6" width="7" height="7.2"/></g>
    <circle r="5.5" fill="#5a2a5a"/>
   </g>
   <path d="M8 39 L27 18.5" stroke="#d23a2a" stroke-width="6.5" stroke-linecap="round"/>
   <circle cx="8.6" cy="38.3" r="1.2" fill="#8a1a10"/>
   <path d="M27 18.5 L31 14" stroke="#e8e8e8" stroke-width="4"/>
   <circle cx="35.5" cy="10" r="6.5" fill="#e4e4e4"/>
   <path d="M35 3 L39 9 L44 6 L42 1 Z" fill="#6e2e6c"/>
  </svg>
 </div>
 <!-- terminal -->
 <div class="tile" style="top:524px">
  <div class="bg" style="background:linear-gradient(#d8d0d8,#b8b0b8 45%,#aca4ac);border-color:rgba(255,255,255,.45)"></div>
  <svg width="46" height="46" viewBox="0 0 46 46">
   <rect x="5" y="7" width="36" height="32" rx="1.5" fill="#e8e8e8"/>
   <rect x="7" y="9" width="32" height="28" fill="#2a2a2a"/>
   <path d="M11 15 L17 18.5 L11 22" fill="none" stroke="#f2f2f2" stroke-width="2"/>
   <rect x="18" y="22.5" width="8" height="2" fill="#f2f2f2"/>
  </svg>
 </div>
 <svg class="a" style="left:0;top:543px" width="5" height="10" viewBox="0 0 5 10"><path d="M0 0 L5 5 L0 10 Z" fill="#f0eef0"/></svg>
 <svg class="a" style="left:52px;top:543px" width="5" height="10" viewBox="0 0 5 10"><path d="M5 0 L0 5 L5 10 Z" fill="#f0eef0"/></svg>
 <svg class="a" style="left:0;top:127px" width="5" height="10" viewBox="0 0 5 10"><path d="M0 0 L5 5 L0 10 Z" fill="#f0eef0"/></svg>
 <!-- small workspace -->
 <div class="a" style="left:20px;top:574px;width:17px;height:12px;background:rgba(255,255,255,.1);border-radius:1px"></div>
 <!-- disks --><svg width="0" height="0" style="position:absolute"><defs><linearGradient id="dkb"><stop offset="0" stop-color="#5a5a5a"/><stop offset=".5" stop-color="#b0b0b0"/><stop offset="1" stop-color="#6a6a6a"/></linearGradient></defs></svg>
 <div class="tile" style="top:588px">
  <div class="bg" style="background:linear-gradient(#a868a8,#823e84 35%,#742e76)"></div>
  <svg width="46" height="46" viewBox="0 0 46 46">
   <path d="M8.5 10 H37.5 L43 34 H3 Z" fill="#e8e8e8"/>
   <ellipse cx="23" cy="21.5" rx="12" ry="7" fill="none" stroke="#d4d4d4" stroke-width="1.2"/>
   <ellipse cx="23" cy="21.5" rx="4.5" ry="2.5" fill="#d8d8d8"/>
   <rect x="3" y="34" width="40" height="5" fill="url(#dkb)"/>
   <rect x="5.5" y="35.5" width="4" height="2" fill="#1a1a1a"/>
  </svg>
 </div>
 <div class="tile" style="top:640px">
  <div class="bg" style="background:linear-gradient(#a868a8,#823e84 35%,#742e76)"></div>
  <svg width="46" height="46" viewBox="0 0 46 46">
   <path d="M8.5 10 H37.5 L43 34 H3 Z" fill="#e8e8e8"/>
   <ellipse cx="23" cy="21.5" rx="12" ry="7" fill="none" stroke="#d4d4d4" stroke-width="1.2"/>
   <ellipse cx="23" cy="21.5" rx="4.5" ry="2.5" fill="#d8d8d8"/>
   <rect x="3" y="34" width="40" height="5" fill="url(#dkb)"/>
   <rect x="5.5" y="35.5" width="4" height="2" fill="#1a1a1a"/>
  </svg>
 </div>
 <!-- trash -->
 <div class="tile" style="top:878px">
  <div class="bg" style="background:linear-gradient(#a060a0,#7a387c 18%,#6e2c70);border-color:rgba(255,255,255,.14)"></div>
  <svg width="46" height="46" viewBox="0 0 46 46">
   <path d="M8 11 L11.5 39 H34.5 L38 11 Z" fill="rgba(200,150,200,.16)" stroke="rgba(230,200,230,.25)" stroke-width=".8"/>
   <ellipse cx="23" cy="11.5" rx="15" ry="4.2" fill="none" stroke="#e6e6e6" stroke-width="2.6"/>
   <ellipse cx="23" cy="12" rx="12" ry="2" fill="#9a9a9a" opacity=".6"/>
   <ellipse cx="23" cy="39.5" rx="11.5" ry="2.8" fill="#dedede"/>
  </svg>
 </div>
</div>

<div id="naut">
 <div id="nhead">
  <svg class="a" style="left:6px;top:5px" width="54" height="16" viewBox="0 0 54 16">
   <g fill="#5a5954" stroke="#4e4d49" stroke-width="1"><circle cx="7.5" cy="7.5" r="6.5"/><circle cx="24" cy="7.5" r="6.5"/><circle cx="40.5" cy="7.5" r="6.5"/></g>
   <g stroke="#45443f" stroke-width="1.3" fill="none"><path d="M5.3 5.3 L9.7 9.7 M9.7 5.3 L5.3 9.7"/><path d="M21 7.5 H27"/><rect x="38" y="5" width="5" height="5"/></g>
  </svg>
  <div class="a" style="left:64px;top:5px;font-size:13px;font-weight:bold;color:#8a8983;line-height:16px">Home</div>
  <div class="a" style="left:7px;top:28px;width:56px;height:29px;border:1px solid #36352f;border-radius:3px"></div>
  <svg class="a" style="left:16px;top:35px" width="44" height="15" viewBox="0 0 44 15">
   <path d="M7 2.5 L2.5 7.5 L7 12.5" fill="none" stroke="#c8c6c0" stroke-width="1.5"/>
   <path d="M32 2.5 L36.5 7.5 L32 12.5" fill="none" stroke="#c8c6c0" stroke-width="1.5"/>
  </svg>
  <div class="a" style="left:72px;top:28px;width:65px;height:29px;background:#46453f;border:1px solid #34332e;border-radius:3px"></div>
  <svg class="a" style="left:78px;top:36px" width="15" height="14" viewBox="0 0 15 14">
   <path d="M1.5 7.2 L7.5 1.8 L13.5 7.2 M3.5 6 V12.5 H6.2 V8.8 H8.8 V12.5 H11.5 V6" fill="none" stroke="#e2e0da" stroke-width="1.7" stroke-linejoin="round"/>
  </svg>
  <div class="a" style="left:95px;top:35px;font-size:13px;font-weight:bold;color:#e2e0da;line-height:16px">Home</div>
  <svg class="a" style="left:689px;top:34px" width="16" height="16" viewBox="0 0 16 16">
   <circle cx="6.3" cy="6.5" r="4.3" fill="none" stroke="#c9c7c1" stroke-width="1.9"/>
   <path d="M9.4 9.6 L13.2 13.4" stroke="#c9c7c1" stroke-width="2.2" stroke-linecap="round"/>
  </svg>
  <svg class="a" style="left:728px;top:37px" width="12" height="11" viewBox="0 0 12 11">
   <g fill="#d6d4ce"><rect x="0.5" y="1" width="2.2" height="2"/><rect x="4" y="1" width="7" height="2"/><rect x="0.5" y="4.5" width="2.2" height="2"/><rect x="4" y="4.5" width="7" height="2"/><rect x="0.5" y="8" width="2.2" height="2"/><rect x="4" y="8" width="7" height="2"/></g>
  </svg>
  <div class="a" style="left:749px;top:27px;width:27px;height:29px;background:#393834;border:1px solid #2f2e2a;border-radius:2px;box-shadow:inset 0 1px 2px rgba(0,0,0,.25)"></div>
  <svg class="a" style="left:758px;top:37px" width="11" height="11" viewBox="0 0 11 11">
   <g fill="#d6d4ce"><rect x="1" y="1" width="2" height="2"/><rect x="4.5" y="1" width="2" height="2"/><rect x="8" y="1" width="2" height="2"/><rect x="1" y="4.5" width="2" height="2"/><rect x="4.5" y="4.5" width="2" height="2"/><rect x="8" y="4.5" width="2" height="2"/><rect x="1" y="8" width="2" height="2"/><rect x="4.5" y="8" width="2" height="2"/><rect x="8" y="8" width="2" height="2"/></g>
  </svg>
 </div>
 <div id="side">
  <div class="a" style="left:0;top:32px;width:165px;height:24px;background:#e1e0de"></div>
  <div class="si" style="top:4px"><svg width="15" height="15" viewBox="0 0 15 15"><circle cx="7.5" cy="7.5" r="5.8" fill="none" stroke="#555" stroke-width="1.4"/><path d="M5 7 L7.3 8.6 L10.2 5.6" fill="none" stroke="#555" stroke-width="1.2"/></svg><span>Recent</span></div>
  <div class="si" style="top:30px;color:#3f3f3f"><svg width="15" height="15" viewBox="0 0 15 15"><path d="M1.5 7.5 L7.5 2 L13.5 7.5 M3.5 6.3 V13 H6.3 V9.3 H8.7 V13 H11.5 V6.3" fill="none" stroke="#333" stroke-width="1.8" stroke-linejoin="round"/></svg><span>Home</span></div>
  <div class="si" style="top:57px"><svg width="15" height="15" viewBox="0 0 15 15"><path d="M1 1.5 H5.5 L6.5 3 H14 V13.5 H1 Z" fill="#5a5a5a"/><path d="M1 4.2 H14" stroke="#f2f1f0" stroke-width=".8"/></svg><span>Desktop</span></div>
  <div class="si" style="top:83px"><svg width="15" height="15" viewBox="0 0 15 15"><path d="M2.7 1 H8.8 L12.3 4.5 V14 H2.7 Z M8.5 1.2 V4.8 H12" fill="none" stroke="#555" stroke-width="1.4" stroke-linejoin="round"/></svg><span>Documents</span></div>
  <div class="si" style="top:110px"><svg width="15" height="15" viewBox="0 0 15 15"><path d="M7.5 1 V12 M2.8 7.6 L7.5 12.4 L12.2 7.6" fill="none" stroke="#555" stroke-width="1.5" stroke-dasharray="none"/></svg><span>Downloads</span></div>
  <div class="si" style="top:136px"><svg width="15" height="15" viewBox="0 0 15 15"><path d="M5.3 11.5 V2.2 L12.8 1 V10.3" fill="none" stroke="#555" stroke-width="1.4"/><circle cx="3.6" cy="11.6" r="2.1" fill="none" stroke="#555" stroke-width="1.4"/><circle cx="11.1" cy="10.4" r="2.1" fill="none" stroke="#555" stroke-width="1.4"/></svg><span>Music</span></div>
  <div class="si" style="top:163px"><svg width="15" height="15" viewBox="0 0 15 15"><path d="M1.5 4 H4.5 L5.8 2.3 H9.2 L10.5 4 H13.5 V12.5 H1.5 Z" fill="#5a5a5a"/><circle cx="7.5" cy="8" r="2.5" fill="#f2f1f0"/><circle cx="7.5" cy="8" r="1.3" fill="#5a5a5a"/></svg><span>Pictures</span></div>
  <div class="si" style="top:189px"><svg width="15" height="15" viewBox="0 0 15 15"><path d="M1 5 L4 7.5 L1 10 Z" fill="#555"/><rect x="4.5" y="4" width="9.5" height="7" fill="#555"/></svg><span>Videos</span></div>
  <div class="si" style="top:216px"><svg width="15" height="15" viewBox="0 0 15 15"><path d="M2 3 H13 M5.5 3 V1.5 H9.5 V3 M3.3 3.5 L3.8 13.5 H11.2 L11.7 3.5" fill="none" stroke="#555" stroke-width="1.3"/><rect x="5.5" y="6" width="4" height="5" fill="none" stroke="#555" stroke-width="1.1"/></svg><span>Trash</span></div>
  <div class="si" style="top:242px"><svg width="15" height="15" viewBox="0 0 15 15"><rect x="1.2" y="3" width="7" height="5.5" fill="none" stroke="#555" stroke-width="1.3"/><path d="M2 11.5 H7.5 M4.7 8.5 V11.5" stroke="#555" stroke-width="1.3"/><path d="M9.5 5 H13.3 V10 H10 M11.5 10 V13" fill="none" stroke="#555" stroke-width="1.3"/></svg><span>Network</span></div>
  <div class="a" style="left:0;top:271px;width:165px;height:1px;background:#e0dfdc"></div>
  <div class="si" style="top:277px"><svg width="15" height="15" viewBox="0 0 15 15"><rect x="2.3" y="1.3" width="10.4" height="12.4" rx="1.2" fill="none" stroke="#555" stroke-width="1.4"/><circle cx="7.5" cy="7.5" r="2.8" fill="none" stroke="#555" stroke-width="1.2"/><path d="M7.5 7.5 L9.5 10.5" stroke="#555" stroke-width="1.2"/></svg><span>Computer</span></div>
  <div class="si" style="top:304px"><svg width="15" height="15" viewBox="0 0 15 15"><rect x="2.3" y="1.3" width="10.4" height="12.4" rx="1.2" fill="none" stroke="#555" stroke-width="1.4"/><circle cx="7.5" cy="7.5" r="2.8" fill="none" stroke="#555" stroke-width="1.2"/><path d="M7.5 7.5 L9.5 10.5" stroke="#555" stroke-width="1.2"/></svg><span>New Volume</span></div>
  <div class="si" style="top:330px"><svg width="15" height="15" viewBox="0 0 15 15"><rect x="2.3" y="1.3" width="10.4" height="12.4" rx="1.2" fill="none" stroke="#555" stroke-width="1.4"/><rect x="5" y="4.5" width="5" height="6" fill="#555"/></svg><span>Windows</span></div>
  <div class="si" style="top:357px"><svg width="15" height="15" viewBox="0 0 15 15"><rect x="4" y="1.3" width="7" height="8.5" rx="1" fill="none" stroke="#555" stroke-width="1.4"/><path d="M7.5 10 V12.5 M2 13 H13" stroke="#555" stroke-width="1.4"/></svg><span>Connect to Server</span></div>
 </div>
 <div id="content">
  <svg width="0" height="0" style="position:absolute"><defs>
<linearGradient id="fb" x1="0" y1="0" x2="1" y2="1"><stop offset="0" stop-color="#f4b878"/><stop offset=".45" stop-color="#ec8c48"/><stop offset="1" stop-color="#dc4e1c"/></linearGradient>
<radialGradient id="dk" cx="60%" cy="55%" r="60%"><stop offset="0" stop-color="#c070c8"/><stop offset=".6" stop-color="#9838a8"/><stop offset="1" stop-color="#70208a"/></radialGradient>
<symbol id="folder" viewBox="0 0 41 35">
 <path d="M1 8 V2 Q1 1 2 1 H16 L18 4 H39 Q40 4 40 5 V9 Z" fill="#efecea" stroke="#d8d4d0" stroke-width=".8"/>
 <rect x="4" y="3.2" width="10" height="1.6" fill="#ec8a5a"/>
 <path d="M0.5 8.5 H40.5 V32 Q40.5 34 38.5 34 H2.5 Q0.5 34 0.5 32 Z" fill="url(#fb)"/>
 <path d="M0.5 32.5 Q0.5 34 2.5 34 H38.5 Q40.5 34 40.5 32.5" fill="none" stroke="#b8401a" stroke-width="1"/>
</symbol>
</defs></svg>
<svg class="a" style="left:56.5px;top:13px" width="41" height="35" viewBox="0 0 41 35">
<rect x="0.5" y="0.5" width="40" height="34" rx="3" fill="url(#dk)"/>
<rect x="0.5" y="0.5" width="40" height="5" rx="2" fill="#efe6d0"/><rect x="0.5" y="4.5" width="40" height="1" fill="#b080a8"/>
<rect x="4" y="9" width="4.5" height="5" fill="#f4eef4"/><rect x="4" y="17" width="4.5" height="5" fill="#f4eef4"/>
</svg>
<div class="fi" style="left:22px;top:51px">Desktop</div>
<svg class="a" style="left:193.5px;top:13px" width="41" height="37" viewBox="0 0 41 37"><use href="#folder" width="41" height="35"/><path d="M23 13 H34 L38 17 V36 H23 Z" fill="#ececec" stroke="#b0b0b0" stroke-width=".8"/><g stroke="#c0c0c0" stroke-width=".9"><path d="M25 19 H35 M25 22 H35 M25 25 H35 M25 28 H35 M25 31 H35"/></g></svg>
<div class="fi" style="left:159px;top:51px">Documents</div>
<svg class="a" style="left:329.5px;top:13px" width="41" height="37" viewBox="0 0 41 37"><use href="#folder" width="41" height="35"/><path d="M24 13 H33 V25 H38 L28.5 35 L19 25 H24 Z" fill="#e4e4e4"/></svg>
<div class="fi" style="left:295px;top:51px">Downloads</div>
<svg class="a" style="left:466.5px;top:13px" width="41" height="37" viewBox="0 0 41 37"><use href="#folder" width="41" height="35"/><path d="M26 28 V16 L37 13 V26" fill="none" stroke="#505050" stroke-width="2.2"/><ellipse cx="23.5" cy="29" rx="3.5" ry="3" fill="#505050"/><ellipse cx="34.5" cy="27" rx="3.5" ry="3" fill="#505050"/></svg>
<div class="fi" style="left:432px;top:51px">Music</div>
<svg class="a" style="left:56.5px;top:82px" width="41" height="37" viewBox="0 0 41 37"><use href="#folder" width="41" height="35"/><path d="M14 21 L26 14 L32 26 L20 33 Z" fill="#50505a" stroke="#e8e8e8" stroke-width="1.2"/><rect x="19.5" y="18.5" width="16" height="15" fill="#e8e8e8"/><rect x="21.5" y="20.5" width="12" height="11" fill="#4a3a5a"/></svg>
<div class="fi" style="left:22px;top:119px">Pictures</div>
<svg class="a" style="left:193.5px;top:82px" width="41" height="37" viewBox="0 0 41 37"><use href="#folder" width="41" height="35"/><circle cx="30" cy="19" r="3.8" fill="#dcdcdc"/><path d="M28 22 H32 L33 27 Q39 28 39 35 H21 Q21 28 27 27 Z" fill="#dcdcdc"/></svg>
<div class="fi" style="left:159px;top:119px">Public</div>
<svg class="a" style="left:329.5px;top:82px" width="41" height="37" viewBox="0 0 41 37"><use href="#folder" width="41" height="35"/><path d="M22 13 H37 V35 H22 Z" fill="#e8e8e8" stroke="#b8b8b8" stroke-width=".8"/><text x="29.5" y="30" text-anchor="middle" font-size="12" font-family="Liberation Sans" fill="#a0a0a0">a</text><path d="M19 35 L26 27" stroke="#c0c0c0" stroke-width="1"/></svg>
<div class="fi" style="left:295px;top:119px">Templates</div>
<svg class="a" style="left:466.5px;top:82px" width="41" height="37" viewBox="0 0 41 37"><use href="#folder" width="41" height="35"/><rect x="22" y="12" width="15" height="22" fill="#3a2a3a"/><rect x="25" y="13" width="9" height="20" fill="#9a6aa8"/><g fill="#e0d0d0"><rect x="22.7" y="14" width="1.5" height="2"/><rect x="22.7" y="19" width="1.5" height="2"/><rect x="22.7" y="24" width="1.5" height="2"/><rect x="22.7" y="29" width="1.5" height="2"/><rect x="34.8" y="14" width="1.5" height="2"/><rect x="34.8" y="19" width="1.5" height="2"/><rect x="34.8" y="24" width="1.5" height="2"/><rect x="34.8" y="29" width="1.5" height="2"/></g></svg>
<div class="fi" style="left:432px;top:119px">Videos</div>
 </div>
</div>

<div id="term">
 <div id="thead">
  <svg class="a" style="left:6px;top:5px" width="54" height="16" viewBox="0 0 54 16">
   <defs><linearGradient id="cb" x1="0" y1="0" x2="0" y2="1"><stop offset="0" stop-color="#f27a4a"/><stop offset="1" stop-color="#e0501e"/></linearGradient></defs>
   <circle cx="7.7" cy="7.3" r="6.6" fill="url(#cb)" stroke="#5a2a1a" stroke-width=".6"/>
   <path d="M5.6 5.2 L9.8 9.4 M9.8 5.2 L5.6 9.4" stroke="#5a2010" stroke-width="1.3"/>
   <circle cx="24.3" cy="7.3" r="6.4" fill="#706f6a" stroke="#45443f" stroke-width=".6"/>
   <path d="M21.3 7.3 H27.3" stroke="#45443f" stroke-width="1.3"/>
   <circle cx="41" cy="7.3" r="6.4" fill="#706f6a" stroke="#45443f" stroke-width=".6"/>
   <rect x="38.5" y="4.8" width="5" height="5" fill="none" stroke="#45443f" stroke-width="1.2"/>
  </svg>
  <div class="a" style="left:65px;top:4px;font-size:13px;font-weight:bold;color:#dfdbd2;line-height:16px">ubuntu@ubuntu: ~</div>
 </div>
 <div id="tbody">
  <div class="tl" style="top:1px">To run a command as administrator (user "root"), use "sudo &lt;command&gt;".</div>
  <div class="tl" style="top:16px">See "man sudo_root" for details.</div>
  <div class="tl" style="top:46px"><b style="color:#8ae234">ubuntu@ubuntu</b>:<b style="color:#729fcf">~</b>$ <span style="background:#f4f4f4;color:#f4f4f4"> </span></div>
  <div class="a" style="left:641px;top:0;width:4px;height:361px;background:linear-gradient(90deg,#4a1410,#cc6c58 30%,#cc6c58 70%,#5a1a12)"></div>
 </div>
</div>

<div class="a" style="left:57px;top:22px;width:1633px;height:6px;background:linear-gradient(rgba(0,0,0,.4),rgba(0,0,0,.12) 40%,rgba(0,0,0,0))"></div>
</body></html>
